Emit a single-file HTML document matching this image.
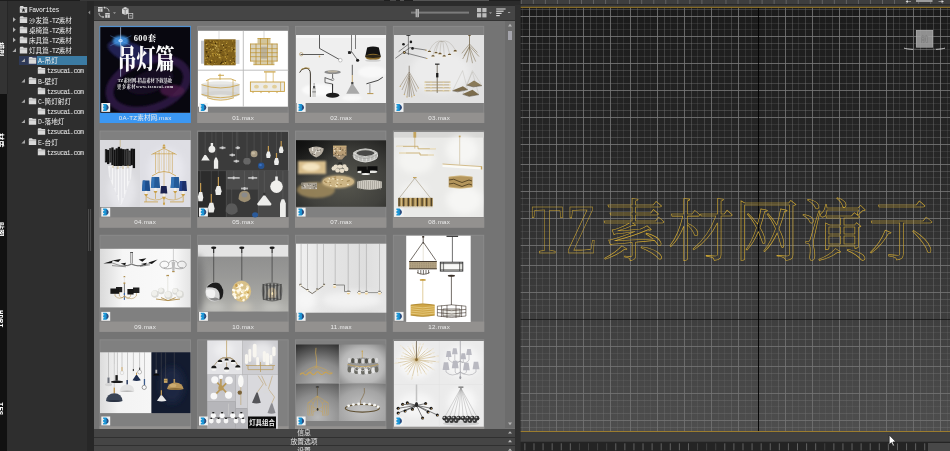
<!DOCTYPE html><html><head><meta charset="utf-8"><title>TZ</title><style>
*{margin:0;padding:0;box-sizing:border-box}
html,body{width:950px;height:451px;overflow:hidden;background:#2d2d2d}
body{position:relative;font-family:"Liberation Mono","Noto Sans CJK SC",monospace;font-size:6.6px;color:#d6d6d6}
.a{position:absolute}
.t{position:absolute;white-space:nowrap;line-height:10px;height:10px;font-size:6.5px;letter-spacing:-0.6px;will-change:transform;color:#f2f2f2}
.t b{font-weight:normal;letter-spacing:0;font-size:6.6px}
.lab{position:absolute;text-align:center;white-space:nowrap;line-height:10.3px;height:10.3px;color:#ececec;font-family:"Liberation Sans","Noto Sans CJK SC",sans-serif;font-size:6.2px;letter-spacing:0.25px;will-change:transform}
.lab b{font-weight:normal;letter-spacing:0;font-size:6.6px}
.vt{will-change:transform;position:absolute;white-space:nowrap;transform-origin:0 0;transform:rotate(90deg);color:#fff;font-weight:bold;font-size:7px;line-height:8px;letter-spacing:0}
</style></head><body><div class="a" style="left:0px;top:0px;width:6.7px;height:451px;background:#111;"></div><div class="a" style="left:0px;top:0px;width:6.7px;height:94px;background:#333;"></div><div class="a" style="left:0px;top:0px;width:6.7px;height:1.2px;background:#2a6fa0;"></div><div class="a" style="left:6.7px;top:0px;width:1.5px;height:94px;background:#262626;"></div><div class="vt" style="left:4.2px;top:41.5px;font-size:7.2px">模型</div><div class="vt" style="left:4.2px;top:132.5px;font-size:7.2px">材质</div><div class="vt" style="left:4.2px;top:221.5px;font-size:7.2px">贴图</div><div class="vt" style="left:4.2px;top:310px;font-size:7.4px">HDRI</div><div class="vt" style="left:4.2px;top:402px;font-size:7.4px">IES</div><div class="a" style="left:8.2px;top:0px;width:79px;height:451px;background:#2e2e2e;"></div><div class="a" style="left:0px;top:0px;width:94px;height:1px;background:#1d1d1d;"></div><div class="t" style="left:29.1px;top:6.4px">Favorites</div><div class="t" style="left:29.1px;top:16.57px"><b>沙发篇</b>-TZ<b>素材</b></div><div class="t" style="left:29.1px;top:26.740000000000002px"><b>桌椅篇</b>-TZ<b>素材</b></div><div class="t" style="left:29.1px;top:36.91px"><b>床具篇</b>-TZ<b>素材</b></div><div class="t" style="left:29.1px;top:47.08px"><b>灯具篇</b>-TZ<b>素材</b></div><div class="a" style="left:19px;top:55.65px;width:68px;height:9.4px;background:#2f3a58;"></div><div class="a" style="left:36.5px;top:55.65px;width:50.5px;height:9.4px;background:#3b7ba3;"></div><div class="t" style="left:38.1px;top:57.25px">A-<b>吊灯</b></div><div class="t" style="left:47.1px;top:67.42px">tzsucai.com</div><div class="t" style="left:38.1px;top:77.59px">B-<b>壁灯</b></div><div class="t" style="left:47.1px;top:87.76px">tzsucai.com</div><div class="t" style="left:38.1px;top:97.93px">C-<b>筒灯射灯</b></div><div class="t" style="left:47.1px;top:108.10000000000001px">tzsucai.com</div><div class="t" style="left:38.1px;top:118.27000000000001px">D-<b>落地灯</b></div><div class="t" style="left:47.1px;top:128.44px">tzsucai.com</div><div class="t" style="left:38.1px;top:138.61px">E-<b>台灯</b></div><div class="t" style="left:47.1px;top:148.78px">tzsucai.com</div><svg class="a" style="left:0;top:0" width="94" height="451" viewBox="0 0 94 451"><g transform="translate(19.5,5.800000000000001)"><path d="M0.3 1.2 L0.9 0.3 L3.6 0.3 L4.2 1.2 L7.7 1.2 L7.7 7 L0.3 7 Z" fill="#d9d9d9"/><path d="M0.3 2.6 H7.7" stroke="#9a9a9a" stroke-width="0.5"/><path d="M4 2.2 L4.6 3.8 L6.2 3.8 L4.9 4.8 L5.4 6.4 L4 5.4 L2.6 6.4 L3.1 4.8 L1.8 3.8 L3.4 3.8 Z" fill="#222"/></g><g transform="translate(19.5,15.97)"><path d="M0.3 1.2 L0.9 0.3 L3.6 0.3 L4.2 1.2 L7.7 1.2 L7.7 7 L0.3 7 Z" fill="#d9d9d9"/><path d="M0.3 2.6 H7.7" stroke="#9a9a9a" stroke-width="0.5"/></g><path d="M13.0 17.17 L15.8 19.57 L13.0 21.97 Z" fill="#b0b0b0"/><g transform="translate(19.5,26.14)"><path d="M0.3 1.2 L0.9 0.3 L3.6 0.3 L4.2 1.2 L7.7 1.2 L7.7 7 L0.3 7 Z" fill="#d9d9d9"/><path d="M0.3 2.6 H7.7" stroke="#9a9a9a" stroke-width="0.5"/></g><path d="M13.0 27.340000000000003 L15.8 29.740000000000002 L13.0 32.14 Z" fill="#b0b0b0"/><g transform="translate(19.5,36.309999999999995)"><path d="M0.3 1.2 L0.9 0.3 L3.6 0.3 L4.2 1.2 L7.7 1.2 L7.7 7 L0.3 7 Z" fill="#d9d9d9"/><path d="M0.3 2.6 H7.7" stroke="#9a9a9a" stroke-width="0.5"/></g><path d="M13.0 37.51 L15.8 39.91 L13.0 42.309999999999995 Z" fill="#b0b0b0"/><g transform="translate(19.5,46.48)"><path d="M0.3 1.2 L0.9 0.3 L3.6 0.3 L4.2 1.2 L7.7 1.2 L7.7 7 L0.3 7 Z" fill="#d9d9d9"/><path d="M0.3 2.6 H7.7" stroke="#9a9a9a" stroke-width="0.5"/></g><path d="M16.0 48.28 L16.0 51.879999999999995 L12.4 51.879999999999995 Z" fill="#a8a8a8"/><g transform="translate(28.5,56.65)"><path d="M0.3 1.2 L0.9 0.3 L3.6 0.3 L4.2 1.2 L7.7 1.2 L7.7 7 L0.3 7 Z" fill="#d9d9d9"/><path d="M0.3 2.6 H7.7" stroke="#9a9a9a" stroke-width="0.5"/></g><path d="M25.0 58.45 L25.0 62.05 L21.4 62.05 Z" fill="#a8a8a8"/><g transform="translate(37.5,66.82000000000001)"><path d="M0.3 1.2 L0.9 0.3 L3.6 0.3 L4.2 1.2 L7.7 1.2 L7.7 7 L0.3 7 Z" fill="#d9d9d9"/><path d="M0.3 2.6 H7.7" stroke="#9a9a9a" stroke-width="0.5"/></g><g transform="translate(28.5,76.99000000000001)"><path d="M0.3 1.2 L0.9 0.3 L3.6 0.3 L4.2 1.2 L7.7 1.2 L7.7 7 L0.3 7 Z" fill="#d9d9d9"/><path d="M0.3 2.6 H7.7" stroke="#9a9a9a" stroke-width="0.5"/></g><path d="M25.0 78.79 L25.0 82.39 L21.4 82.39 Z" fill="#a8a8a8"/><g transform="translate(37.5,87.16000000000001)"><path d="M0.3 1.2 L0.9 0.3 L3.6 0.3 L4.2 1.2 L7.7 1.2 L7.7 7 L0.3 7 Z" fill="#d9d9d9"/><path d="M0.3 2.6 H7.7" stroke="#9a9a9a" stroke-width="0.5"/></g><g transform="translate(28.5,97.33000000000001)"><path d="M0.3 1.2 L0.9 0.3 L3.6 0.3 L4.2 1.2 L7.7 1.2 L7.7 7 L0.3 7 Z" fill="#d9d9d9"/><path d="M0.3 2.6 H7.7" stroke="#9a9a9a" stroke-width="0.5"/></g><path d="M25.0 99.13000000000001 L25.0 102.73 L21.4 102.73 Z" fill="#a8a8a8"/><g transform="translate(37.5,107.50000000000001)"><path d="M0.3 1.2 L0.9 0.3 L3.6 0.3 L4.2 1.2 L7.7 1.2 L7.7 7 L0.3 7 Z" fill="#d9d9d9"/><path d="M0.3 2.6 H7.7" stroke="#9a9a9a" stroke-width="0.5"/></g><g transform="translate(28.5,117.67000000000002)"><path d="M0.3 1.2 L0.9 0.3 L3.6 0.3 L4.2 1.2 L7.7 1.2 L7.7 7 L0.3 7 Z" fill="#d9d9d9"/><path d="M0.3 2.6 H7.7" stroke="#9a9a9a" stroke-width="0.5"/></g><path d="M25.0 119.47000000000001 L25.0 123.07000000000001 L21.4 123.07000000000001 Z" fill="#a8a8a8"/><g transform="translate(37.5,127.84)"><path d="M0.3 1.2 L0.9 0.3 L3.6 0.3 L4.2 1.2 L7.7 1.2 L7.7 7 L0.3 7 Z" fill="#d9d9d9"/><path d="M0.3 2.6 H7.7" stroke="#9a9a9a" stroke-width="0.5"/></g><g transform="translate(28.5,138.01000000000002)"><path d="M0.3 1.2 L0.9 0.3 L3.6 0.3 L4.2 1.2 L7.7 1.2 L7.7 7 L0.3 7 Z" fill="#d9d9d9"/><path d="M0.3 2.6 H7.7" stroke="#9a9a9a" stroke-width="0.5"/></g><path d="M25.0 139.81 L25.0 143.41000000000003 L21.4 143.41000000000003 Z" fill="#a8a8a8"/><g transform="translate(37.5,148.18)"><path d="M0.3 1.2 L0.9 0.3 L3.6 0.3 L4.2 1.2 L7.7 1.2 L7.7 7 L0.3 7 Z" fill="#d9d9d9"/><path d="M0.3 2.6 H7.7" stroke="#9a9a9a" stroke-width="0.5"/></g></svg><div class="a" style="left:87px;top:0px;width:7px;height:451px;background:#272727;"></div><svg class="a" style="left:87px;top:0" width="7" height="451" viewBox="0 0 7 451"><path d="M3.2 10.5 L3.2 14.5 L1.2 12.5 Z" fill="#8a8a8a"/><path d="M1.6 209V251M3.6 209V251" stroke="#6a6a6a" stroke-width="0.6"/></svg><div class="a" style="left:94px;top:0px;width:420.7px;height:451px;background:#747474;"></div><div class="a" style="left:94px;top:0px;width:426.7px;height:5.5px;background:#2b2b2b;"></div><div class="a" style="left:94px;top:0px;width:426.7px;height:1px;background:#1f1f1f;"></div><div class="a" style="left:94px;top:5.5px;width:420.5px;height:14.6px;background:#454545;"></div><div class="a" style="left:94px;top:20.1px;width:420.5px;height:0.8px;background:#333;"></div><div class="a" style="left:514.6px;top:5px;width:6.1px;height:446px;background:#2f2f2f;"></div><div class="a" style="left:400px;top:0px;width:4px;height:1px;background:#555;"></div><div class="a" style="left:413px;top:0px;width:76px;height:1px;background:#555;"></div><div class="a" style="left:390px;top:0px;width:6px;height:1px;background:#4a4a4a;"></div><div class="a" style="left:80px;top:0.3px;width:304px;height:0.9px;background:#393939;"></div><svg class="a" style="left:0;top:0;will-change:transform" width="950" height="429" viewBox="0 0 950 429"><defs><clipPath id="mc"><rect x="94" y="21" width="411.3" height="407.6"/></clipPath><filter id="b3" x="-5%" y="-5%" width="110%" height="110%"><feGaussianBlur stdDeviation="0.35"/></filter><filter id="b8" x="-20%" y="-20%" width="140%" height="140%"><feGaussianBlur stdDeviation="1.2"/></filter><filter id="b20" x="-30%" y="-30%" width="160%" height="160%"><feGaussianBlur stdDeviation="3"/></filter></defs><g clip-path="url(#mc)"><rect x="99.60" y="25.90" width="91.30" height="97.10" fill="#3b97f2" /><rect x="100.30" y="26.70" width="89.90" height="86.00" fill="#808080" /><g id="im00"><rect x="100.30" y="27.10" width="89.80" height="85.60" fill="#08070f" /><clipPath id="k00"><rect x="100.3" y="27.099999999999998" width="89.80000000000001" height="85.6"/></clipPath><g clip-path="url(#k00)"><g filter="url(#b8)"><ellipse cx="148.3" cy="84.7" rx="40" ry="24" fill="none" stroke="#2e1742" stroke-width="8" opacity="0.9" transform="rotate(-18 148.3 84.7)"/><ellipse cx="150.3" cy="81.7" rx="24" ry="11" fill="#140a22" transform="rotate(-18 150.3 81.7)"/><ellipse cx="130.3" cy="52.7" rx="24" ry="10" fill="#24245a" opacity="0.9" transform="rotate(20 130.3 52.7)"/><ellipse cx="172.3" cy="90.7" rx="12" ry="6" fill="#4a1a4a" opacity="0.8"/><ellipse cx="120.80" cy="40.70" rx="8.00" ry="5.00" fill="#3a86d0" /></g><g filter="url(#b3)"><ellipse cx="120.60" cy="40.70" rx="2.20" ry="1.60" fill="#d8efff" /><path d="M120.6 27.2V76.7" stroke="#cfe0ff" stroke-width="0.8" fill="none" opacity="0.75"/><path d="M110.3 35.7L131.3 45.7M110.3 45.7L131.3 35.7" stroke="#5fa0f0" stroke-width="0.8" fill="none" opacity="0.45"/></g></g><text x="145.1" y="40.5" text-anchor="middle" font-family="'Liberation Serif','Noto Serif CJK SC',serif" font-weight="900" font-size="8.4" fill="#fafafa" letter-spacing="0.5">600套</text><text transform="translate(146.0 69.0) scale(0.70 1)" text-anchor="middle" font-family="'Liberation Serif','Noto Serif CJK SC',serif" font-weight="900" font-size="27" fill="#fbfbfb">吊灯篇</text><text x="144.9" y="81.5" text-anchor="middle" font-family="'Liberation Serif','Noto Serif CJK SC',serif" font-weight="700" font-size="4.3" fill="#e8e8e8">TZ素材网-精品素材下载基地</text><text x="145.1" y="87.8" text-anchor="middle" font-family="'Liberation Serif','Noto Serif CJK SC',serif" font-weight="700" font-size="4.3" fill="#e8e8e8" textLength="56">更多素材www.tzsucai.com</text><ellipse cx="169.80" cy="76.20" rx="0.50" ry="0.50" fill="#ddd" /><rect x="101.30" y="103.00" width="8.90" height="8.90" fill="#f1f1f1" /><path d="M103.1 103.9 H106.3 Q107.7 104.6 107.89999999999999 106.0 L106.7 107.4 L107.89999999999999 108.8 Q107.7 110.2 106.3 110.9 H103.1 V109.5 L104.6 108.9 L103.1 108.3 V106.5 L104.6 105.9 L103.1 105.3 Z" fill="#1b96d6" /><path d="M106.2 104.7 Q108.8 105.4 108.7 107.4 Q108.8 109.4 106.2 110.1 Q107.2 107.4 106.2 104.7 Z" fill="#2b4a7c" /></g><rect x="197.30" y="25.90" width="91.30" height="97.10" fill="#8d8d8d" /><rect x="198.00" y="26.70" width="89.80" height="96.30" fill="#808080" /><rect x="197.30" y="112.70" width="91.30" height="10.30" fill="#93918f" /><g id="im01"><rect x="198.00" y="30.80" width="89.90" height="75.90" fill="#ffffff" /><path d="M243.3 30.799999999999997V106.7M198.0 70.2H288.4" stroke="#b8b8b8" stroke-width="0.9" fill="none" /><path d="M219.0 30.799999999999997V39.3" stroke="#c8c8c8" stroke-width="0.6" fill="none" /><rect x="201.00" y="40.70" width="3.40" height="23.00" fill="#c4c6cc" /><rect x="235.60" y="39.90" width="3.80" height="24.00" fill="#d0d2d6" /><rect x="204.20" y="39.30" width="31.40" height="26.00" fill="#80611c" /><rect x="211.79" y="53.20" width="0.93" height="0.98" fill="#d8b850" /><rect x="222.14" y="54.72" width="1.42" height="0.88" fill="#5a4210" /><rect x="211.68" y="64.39" width="1.02" height="1.17" fill="#a88428" /><rect x="216.59" y="61.05" width="0.81" height="0.62" fill="#5a4210" /><rect x="216.38" y="40.08" width="1.30" height="0.63" fill="#5a4210" /><rect x="205.89" y="59.05" width="1.34" height="0.72" fill="#5a4210" /><rect x="226.31" y="61.49" width="1.24" height="1.24" fill="#a88428" /><rect x="226.59" y="54.01" width="1.47" height="0.61" fill="#3d2a08" /><rect x="207.54" y="43.07" width="0.80" height="1.27" fill="#a88428" /><rect x="228.12" y="60.91" width="0.98" height="1.17" fill="#5a4210" /><rect x="215.20" y="54.21" width="1.13" height="1.22" fill="#d8b850" /><rect x="232.26" y="40.41" width="0.85" height="0.98" fill="#d8b850" /><rect x="209.53" y="61.04" width="1.47" height="1.22" fill="#5a4210" /><rect x="207.74" y="55.96" width="1.17" height="1.29" fill="#3d2a08" /><rect x="213.21" y="41.27" width="1.37" height="1.29" fill="#c9a43c" /><rect x="214.99" y="41.35" width="1.41" height="0.52" fill="#a88428" /><rect x="227.82" y="61.34" width="0.64" height="0.99" fill="#c9a43c" /><rect x="216.01" y="54.24" width="1.10" height="1.24" fill="#3d2a08" /><rect x="219.86" y="64.46" width="0.88" height="0.56" fill="#5a4210" /><rect x="220.77" y="63.23" width="1.47" height="0.73" fill="#3d2a08" /><rect x="209.32" y="40.75" width="1.38" height="0.75" fill="#e0c66a" /><rect x="231.68" y="49.07" width="1.01" height="0.92" fill="#d8b850" /><rect x="230.78" y="56.59" width="0.69" height="1.28" fill="#5a4210" /><rect x="212.79" y="55.43" width="1.24" height="1.25" fill="#a88428" /><rect x="234.13" y="52.62" width="1.09" height="0.51" fill="#a88428" /><rect x="234.42" y="47.51" width="0.94" height="0.97" fill="#e0c66a" /><rect x="206.41" y="55.26" width="1.02" height="1.04" fill="#3d2a08" /><rect x="222.99" y="46.62" width="1.04" height="0.97" fill="#d8b850" /><rect x="205.24" y="48.86" width="1.17" height="0.74" fill="#5a4210" /><rect x="214.26" y="48.73" width="0.88" height="0.80" fill="#5a4210" /><rect x="212.58" y="59.23" width="0.69" height="1.15" fill="#5a4210" /><rect x="225.25" y="42.96" width="1.05" height="1.02" fill="#3d2a08" /><rect x="211.81" y="44.35" width="0.99" height="1.06" fill="#c9a43c" /><rect x="222.74" y="63.24" width="1.21" height="0.68" fill="#e0c66a" /><rect x="207.01" y="58.10" width="0.80" height="0.95" fill="#3d2a08" /><rect x="211.40" y="42.70" width="1.08" height="0.65" fill="#5a4210" /><rect x="210.14" y="46.61" width="1.33" height="1.01" fill="#5a4210" /><rect x="215.03" y="42.92" width="0.86" height="1.14" fill="#3d2a08" /><rect x="218.63" y="55.43" width="0.86" height="0.95" fill="#c9a43c" /><rect x="232.40" y="43.57" width="0.60" height="1.25" fill="#5a4210" /><rect x="234.40" y="50.47" width="1.46" height="1.24" fill="#e0c66a" /><rect x="205.58" y="51.03" width="1.28" height="1.10" fill="#3d2a08" /><rect x="221.02" y="61.76" width="1.38" height="1.19" fill="#3d2a08" /><rect x="208.22" y="45.76" width="0.63" height="1.14" fill="#5a4210" /><rect x="232.50" y="61.93" width="1.41" height="0.96" fill="#c9a43c" /><rect x="219.13" y="42.70" width="1.05" height="0.69" fill="#c9a43c" /><rect x="220.45" y="49.96" width="1.45" height="0.99" fill="#3d2a08" /><rect x="208.39" y="63.81" width="1.09" height="1.15" fill="#c9a43c" /><rect x="215.23" y="44.59" width="1.08" height="1.15" fill="#e0c66a" /><rect x="211.83" y="46.49" width="1.40" height="0.60" fill="#c9a43c" /><rect x="219.32" y="53.86" width="0.96" height="1.11" fill="#e0c66a" /><rect x="212.71" y="52.78" width="0.98" height="0.88" fill="#c9a43c" /><rect x="230.48" y="58.93" width="0.64" height="0.54" fill="#a88428" /><rect x="234.04" y="60.89" width="0.68" height="0.90" fill="#3d2a08" /><rect x="209.34" y="41.48" width="0.95" height="0.81" fill="#3d2a08" /><rect x="215.50" y="44.44" width="0.90" height="0.60" fill="#5a4210" /><rect x="204.71" y="57.63" width="1.32" height="0.95" fill="#c9a43c" /><rect x="215.87" y="54.69" width="1.30" height="0.80" fill="#c9a43c" /><rect x="223.41" y="50.40" width="0.94" height="0.90" fill="#d8b850" /><rect x="214.11" y="63.27" width="0.98" height="0.51" fill="#e0c66a" /><rect x="220.78" y="56.94" width="0.66" height="0.84" fill="#a88428" /><rect x="208.54" y="40.40" width="0.89" height="1.28" fill="#5a4210" /><rect x="228.49" y="46.20" width="1.02" height="0.60" fill="#d8b850" /><rect x="224.60" y="61.71" width="1.31" height="1.03" fill="#d8b850" /><rect x="214.22" y="52.89" width="1.33" height="1.07" fill="#a88428" /><rect x="208.93" y="58.90" width="0.64" height="0.57" fill="#c9a43c" /><rect x="224.51" y="49.02" width="1.34" height="0.77" fill="#c9a43c" /><rect x="205.37" y="42.55" width="1.03" height="1.06" fill="#3d2a08" /><rect x="222.09" y="59.51" width="0.63" height="1.11" fill="#5a4210" /><rect x="220.58" y="45.61" width="1.10" height="0.58" fill="#5a4210" /><rect x="206.45" y="47.74" width="1.11" height="1.16" fill="#e0c66a" /><rect x="234.75" y="55.72" width="1.01" height="1.06" fill="#a88428" /><rect x="212.24" y="54.57" width="1.44" height="0.95" fill="#c9a43c" /><rect x="215.93" y="45.53" width="1.44" height="1.17" fill="#e0c66a" /><rect x="217.14" y="53.80" width="1.12" height="1.24" fill="#d8b850" /><rect x="219.21" y="55.65" width="1.41" height="0.62" fill="#c9a43c" /><rect x="219.64" y="51.69" width="1.23" height="1.26" fill="#5a4210" /><rect x="226.31" y="44.32" width="0.84" height="0.66" fill="#5a4210" /><rect x="220.17" y="62.88" width="1.37" height="0.93" fill="#3d2a08" /><rect x="224.88" y="60.91" width="1.14" height="0.97" fill="#3d2a08" /><rect x="231.46" y="47.32" width="0.84" height="1.14" fill="#e0c66a" /><rect x="209.80" y="48.64" width="0.89" height="1.12" fill="#e0c66a" /><rect x="217.24" y="57.00" width="1.23" height="0.66" fill="#5a4210" /><rect x="229.81" y="60.08" width="1.10" height="0.89" fill="#d8b850" /><rect x="206.79" y="63.20" width="1.30" height="1.21" fill="#c9a43c" /><rect x="218.72" y="45.39" width="0.81" height="1.07" fill="#d8b850" /><rect x="206.69" y="45.09" width="0.83" height="1.21" fill="#3d2a08" /><rect x="208.75" y="55.12" width="1.21" height="0.53" fill="#3d2a08" /><rect x="209.73" y="40.82" width="0.76" height="0.57" fill="#c9a43c" /><rect x="208.16" y="46.25" width="1.42" height="0.53" fill="#a88428" /><rect x="222.13" y="56.45" width="0.61" height="0.77" fill="#a88428" /><rect x="216.07" y="41.63" width="1.18" height="1.09" fill="#a88428" /><rect x="216.41" y="53.20" width="0.71" height="0.72" fill="#d8b850" /><rect x="217.66" y="50.57" width="1.07" height="0.70" fill="#5a4210" /><rect x="233.03" y="48.98" width="1.30" height="1.11" fill="#3d2a08" /><rect x="224.62" y="56.32" width="1.45" height="1.15" fill="#c9a43c" /><rect x="227.38" y="63.54" width="1.21" height="0.93" fill="#c9a43c" /><rect x="224.74" y="52.32" width="0.65" height="0.74" fill="#d8b850" /><rect x="221.71" y="44.21" width="1.18" height="1.00" fill="#e0c66a" /><rect x="215.80" y="62.52" width="1.01" height="0.59" fill="#5a4210" /><rect x="208.87" y="47.92" width="1.25" height="0.98" fill="#5a4210" /><rect x="213.68" y="44.34" width="1.03" height="1.13" fill="#d8b850" /><rect x="206.67" y="57.45" width="1.28" height="0.93" fill="#d8b850" /><rect x="216.43" y="42.18" width="0.84" height="0.54" fill="#e0c66a" /><rect x="205.87" y="52.22" width="0.82" height="1.12" fill="#3d2a08" /><rect x="231.03" y="63.14" width="1.00" height="1.15" fill="#c9a43c" /><rect x="215.26" y="60.70" width="0.70" height="0.72" fill="#c9a43c" /><rect x="225.18" y="53.70" width="1.42" height="0.59" fill="#d8b850" /><rect x="210.31" y="50.03" width="1.27" height="1.15" fill="#d8b850" /><rect x="208.48" y="54.78" width="1.37" height="1.14" fill="#5a4210" /><rect x="220.53" y="53.80" width="0.78" height="0.70" fill="#3d2a08" /><rect x="205.51" y="59.62" width="1.40" height="1.26" fill="#a88428" /><rect x="214.14" y="62.17" width="0.88" height="0.90" fill="#5a4210" /><rect x="225.34" y="47.13" width="1.37" height="0.89" fill="#5a4210" /><rect x="210.35" y="55.42" width="0.70" height="1.10" fill="#e0c66a" /><rect x="219.45" y="52.69" width="1.01" height="0.65" fill="#5a4210" /><rect x="211.00" y="59.86" width="1.43" height="1.26" fill="#c9a43c" /><rect x="221.69" y="63.48" width="1.40" height="0.61" fill="#c9a43c" /><rect x="223.42" y="40.96" width="0.92" height="0.69" fill="#c9a43c" /><rect x="219.66" y="40.17" width="0.91" height="0.76" fill="#3d2a08" /><rect x="225.58" y="43.03" width="1.37" height="0.98" fill="#c9a43c" /><rect x="226.22" y="58.05" width="0.91" height="1.15" fill="#c9a43c" /><rect x="230.62" y="50.54" width="1.28" height="0.89" fill="#c9a43c" /><rect x="228.36" y="49.83" width="1.36" height="1.06" fill="#a88428" /><rect x="219.61" y="57.04" width="1.08" height="0.84" fill="#d8b850" /><rect x="219.37" y="40.28" width="1.01" height="1.05" fill="#a88428" /><rect x="210.05" y="62.01" width="1.25" height="0.79" fill="#3d2a08" /><rect x="218.12" y="48.67" width="0.96" height="1.28" fill="#e0c66a" /><rect x="212.41" y="48.87" width="1.37" height="0.93" fill="#e0c66a" /><rect x="210.92" y="43.93" width="0.96" height="0.63" fill="#c9a43c" /><rect x="208.81" y="54.80" width="1.00" height="0.65" fill="#c9a43c" /><rect x="216.77" y="47.58" width="0.63" height="1.07" fill="#e0c66a" /><rect x="216.78" y="49.54" width="0.62" height="1.27" fill="#e0c66a" /><rect x="211.90" y="49.35" width="0.77" height="0.77" fill="#c9a43c" /><rect x="215.06" y="42.77" width="0.65" height="1.08" fill="#3d2a08" /><rect x="234.23" y="63.06" width="1.31" height="1.27" fill="#a88428" /><rect x="212.15" y="46.29" width="1.33" height="1.00" fill="#3d2a08" /><rect x="214.17" y="41.11" width="0.99" height="0.57" fill="#5a4210" /><rect x="204.71" y="40.45" width="0.68" height="0.64" fill="#c9a43c" /><rect x="219.15" y="44.39" width="1.06" height="0.76" fill="#a88428" /><rect x="214.87" y="51.57" width="0.92" height="1.03" fill="#a88428" /><rect x="213.80" y="54.75" width="1.45" height="0.57" fill="#3d2a08" /><rect x="210.16" y="49.94" width="1.06" height="0.94" fill="#5a4210" /><rect x="225.14" y="62.73" width="0.76" height="1.09" fill="#d8b850" /><rect x="216.25" y="62.95" width="0.92" height="0.65" fill="#a88428" /><rect x="217.84" y="50.72" width="1.23" height="0.78" fill="#e0c66a" /><rect x="219.91" y="58.37" width="1.42" height="1.06" fill="#a88428" /><rect x="205.89" y="43.96" width="1.28" height="1.16" fill="#c9a43c" /><rect x="227.51" y="56.50" width="0.69" height="0.69" fill="#d8b850" /><rect x="206.30" y="54.88" width="0.64" height="0.87" fill="#d8b850" /><rect x="224.13" y="64.42" width="0.60" height="0.66" fill="#c9a43c" /><rect x="214.82" y="47.42" width="1.01" height="1.16" fill="#e0c66a" /><rect x="211.87" y="40.91" width="0.74" height="1.02" fill="#5a4210" /><rect x="234.36" y="42.48" width="0.86" height="0.67" fill="#5a4210" /><rect x="220.17" y="52.22" width="1.42" height="0.76" fill="#5a4210" /><rect x="228.22" y="51.29" width="1.16" height="0.53" fill="#c9a43c" /><rect x="222.66" y="61.00" width="0.69" height="1.25" fill="#3d2a08" /><rect x="207.19" y="51.24" width="0.80" height="1.16" fill="#5a4210" /><rect x="207.89" y="51.74" width="1.20" height="1.06" fill="#a88428" /><rect x="222.81" y="50.75" width="0.70" height="1.17" fill="#5a4210" /><rect x="218.00" y="49.11" width="0.71" height="0.51" fill="#3d2a08" /><rect x="226.59" y="41.62" width="0.91" height="0.89" fill="#c9a43c" /><rect x="232.50" y="56.72" width="0.93" height="1.13" fill="#c9a43c" /><rect x="222.90" y="45.01" width="0.92" height="1.30" fill="#3d2a08" /><rect x="211.73" y="50.59" width="0.83" height="0.76" fill="#d8b850" /><rect x="232.71" y="57.71" width="1.39" height="1.29" fill="#5a4210" /><rect x="218.60" y="57.34" width="1.37" height="0.79" fill="#e0c66a" /><rect x="231.87" y="63.25" width="1.04" height="1.12" fill="#a88428" /><rect x="218.78" y="54.27" width="0.63" height="1.27" fill="#c9a43c" /><rect x="210.17" y="42.08" width="1.25" height="0.74" fill="#5a4210" /><path d="M264.0 30.799999999999997V38.7" stroke="#b9b9b9" stroke-width="0.6" fill="none" /><rect x="257.50" y="38.30" width="13.00" height="5.60" fill="#d2c49a" /><rect x="250.20" y="43.70" width="27.30" height="17.60" fill="#d9d2bc" /><rect x="253.40" y="61.30" width="21.00" height="3.60" fill="#d6cba8" /><path d="M250.2 44.0H277.5M250.2 48.7H277.5M250.2 52.7H277.5M250.2 56.7H277.5M250.2 61.099999999999994H277.5M253.4 64.7H274.4M257.5 38.5H270.5" stroke="#c39a3a" stroke-width="0.8" fill="none" /><path d="M250.5 43.7V61.3M256.0 43.7V64.7M260.5 38.3V64.7M267.5 38.3V64.7M272.0 43.7V64.7M277.2 43.7V61.3" stroke="#b48a2e" stroke-width="0.7" fill="none" /><rect x="261.00" y="46.70" width="6.00" height="12.00" fill="#a89c84" opacity="0.6"/><path d="M220.0 73.7V79.7M218.0 75.3H224.0" stroke="#c8a040" stroke-width="0.9" fill="none" /><path d="M206.0 80.9L210.0 78.9H231.0L236.0 80.9" stroke="#c8a040" stroke-width="0.8" fill="none" /><ellipse cx="220.50" cy="84.50" rx="19.00" ry="3.20" fill="#e9e9e6" /><rect x="201.50" y="84.50" width="38.00" height="10.00" fill="#dcdcda" /><ellipse cx="220.50" cy="94.50" rx="19.00" ry="3.40" fill="#d4d4d2" /><ellipse cx="220.50" cy="97.10" rx="13.50" ry="2.60" fill="#e6e6e2" /><path d="M201.5 84.7Q220.5 91.2 239.5 84.7M201.5 94.3Q220.5 101.2 239.5 94.3M207.0 97.7Q220.5 102.7 234.0 97.7" stroke="#c9a040" stroke-width="0.8" fill="none" /><path d="M208.0 79.7V96.7M233.0 79.7V96.7" stroke="#c9a040" stroke-width="0.6" fill="none" /><path d="M264.0 71.9H275.5" stroke="#c9a040" stroke-width="1.2" fill="none" /><path d="M266.0 72.2V82.2M273.2 72.2V82.2" stroke="#c9a040" stroke-width="0.6" fill="none" /><rect x="250.40" y="82.00" width="34.00" height="9.40" fill="#ecebe6" /><rect x="250.4" y="82.0" width="34" height="9.4" fill="none" stroke="#c9a040" stroke-width="0.9"/><path d="M280.6 82.0V91.4" stroke="#c9a040" stroke-width="0.7" fill="none" /><ellipse cx="256.50" cy="86.70" rx="2.40" ry="1.90" fill="#e2cf9a" /><ellipse cx="265.50" cy="86.70" rx="2.40" ry="1.90" fill="#e2cf9a" /><ellipse cx="274.50" cy="86.70" rx="2.40" ry="1.90" fill="#e2cf9a" /><path d="M253.0 91.7V93.10000000000001M261.0 91.7V93.10000000000001M269.0 91.7V93.10000000000001M277.0 91.7V93.10000000000001" stroke="#c9a040" stroke-width="0.9" fill="none" /><rect x="199.00" y="103.00" width="8.90" height="8.90" fill="#f1f1f1" /><path d="M200.8 103.9 H204.0 Q205.4 104.6 205.6 106.0 L204.4 107.4 L205.6 108.8 Q205.4 110.2 204.0 110.9 H200.8 V109.5 L202.3 108.9 L200.8 108.3 V106.5 L202.3 105.9 L200.8 105.3 Z" fill="#1b96d6" /><path d="M203.9 104.7 Q206.5 105.4 206.4 107.4 Q206.5 109.4 203.9 110.1 Q204.9 107.4 203.9 104.7 Z" fill="#2b4a7c" /></g><rect x="295.00" y="25.90" width="91.30" height="97.10" fill="#8d8d8d" /><rect x="295.70" y="26.70" width="89.80" height="96.30" fill="#808080" /><rect x="295.00" y="112.70" width="91.30" height="10.30" fill="#93918f" /><g id="im02"><g transform="translate(0.00 0.00)"><rect x="296.00" y="35.00" width="90.00" height="68.00" fill="#efefef" /><rect x="296.00" y="35.00" width="90.00" height="3.00" fill="#f6f6f6" /><clipPath id="k1"><rect x="296" y="35" width="90" height="68"/></clipPath><g clip-path="url(#k1)"><g filter="url(#b8)"><ellipse cx="318.00" cy="90.00" rx="16.00" ry="6.00" fill="#fafafa" /><ellipse cx="372.00" cy="72.00" rx="14.00" ry="6.00" fill="#f8f8f8" /><ellipse cx="352.00" cy="98.00" rx="10.00" ry="3.00" fill="#f8f8f8" /></g></g><path d="M319.5 35V48.4L340 59.9M300.6 54.5H324" stroke="#1a1a1a" stroke-width="0.7" fill="none" /><circle cx="301.2" cy="54.2" r="1.7" fill="none" stroke="#9a7a3a" stroke-width="0.5"/><circle cx="340.3" cy="60.2" r="1.8" fill="#fff" stroke="#777" stroke-width="0.4"/><ellipse cx="319.50" cy="56.40" rx="0.80" ry="1.00" fill="#d9b878" /><path d="M351.5 35V50.6M355.5 35V49" stroke="#2a2a2a" stroke-width="0.6" fill="none" /><path d="M351 50.8L357.4 59.8" stroke="#222" stroke-width="0.6" fill="none" /><ellipse cx="349.40" cy="52.40" rx="2.00" ry="1.50" fill="#222" /><ellipse cx="347.20" cy="52.80" rx="0.90" ry="1.20" fill="#eee" /><ellipse cx="357.60" cy="60.20" rx="1.60" ry="1.50" fill="#1a1a1a" /><path d="M365.2 56.6 L367.2 47.4 Q373 45.6 378.8 47.4 L380.8 56.6 Z" fill="#131313" /><ellipse cx="373.00" cy="57.00" rx="7.60" ry="3.20" fill="#8a6a2a" /><ellipse cx="373.00" cy="56.40" rx="7.80" ry="1.60" fill="#2a2418" /><ellipse cx="373.00" cy="60.60" rx="8.00" ry="1.20" fill="#d0d0d0" filter="url(#b3)"/><path d="M299.6 72.6Q301 68.4 306 68.2Q310.4 68.6 310.4 74V96.9" stroke="#2a2418" stroke-width="0.9" fill="none" /><path d="M301 69.6Q305 66.6 309.6 68.4" stroke="#a8842e" stroke-width="0.8" fill="none" /><rect x="312.30" y="88.00" width="3.60" height="9.00" fill="#d2d2d0" /><rect x="313.00" y="86.00" width="2.20" height="2.40" fill="#555" /><path d="M314.1 83V86" stroke="#444" stroke-width="0.5" fill="none" /><rect x="312.30" y="91.40" width="3.60" height="1.00" fill="#777" /><ellipse cx="332.60" cy="72.20" rx="8.20" ry="1.90" fill="#8c8c8c" /><ellipse cx="332.60" cy="71.40" rx="5.00" ry="1.00" fill="#b8b0a0" /><path d="M332.6 74V78.6M324.8 77.6L332.6 80.4M325 77.6V82.6L332.6 84" stroke="#2a2a2a" stroke-width="0.7" fill="none" /><circle cx="332.8" cy="79.4" r="1.1" fill="#eee" stroke="#333" stroke-width="0.4"/><path d="M332.6 84V93" stroke="#222" stroke-width="1.0" fill="none" /><ellipse cx="332.60" cy="95.20" rx="6.60" ry="2.50" fill="#1c1c1c" /><path d="M352.3 64.8V75" stroke="#222" stroke-width="0.7" fill="none" /><path d="M352.3 75V82" stroke="#b08a3a" stroke-width="0.7" fill="none" /><rect x="351.20" y="82.00" width="2.20" height="2.60" fill="#444" /><path d="M351.2 84.6 L353.4 84.6 L359.6 93.8 L346.2 93.8 Z" fill="#a9a9a9" /><path d="M366.4 83.8L378 80.4L382.8 77.2" stroke="#333" stroke-width="0.9" fill="none" /><path d="M369.9 84V93.4" stroke="#444" stroke-width="0.5" fill="none" /><path d="M367.2 93.6H373.4" stroke="#b08a3a" stroke-width="0.9" fill="none" /></g><rect x="296.70" y="103.00" width="8.90" height="8.90" fill="#f1f1f1" /><path d="M298.5 103.9 H301.7 Q303.09999999999997 104.6 303.3 106.0 L302.09999999999997 107.4 L303.3 108.8 Q303.09999999999997 110.2 301.7 110.9 H298.5 V109.5 L300.0 108.9 L298.5 108.3 V106.5 L300.0 105.9 L298.5 105.3 Z" fill="#1b96d6" /><path d="M301.59999999999997 104.7 Q304.2 105.4 304.09999999999997 107.4 Q304.2 109.4 301.59999999999997 110.1 Q302.59999999999997 107.4 301.59999999999997 104.7 Z" fill="#2b4a7c" /></g><rect x="392.90" y="25.90" width="91.30" height="97.10" fill="#8d8d8d" /><rect x="393.60" y="26.70" width="89.80" height="96.30" fill="#808080" /><rect x="392.90" y="112.70" width="91.30" height="10.30" fill="#93918f" /><g id="im03"><g transform="translate(0.00 0.00)"><rect x="394.00" y="35.00" width="90.00" height="68.00" fill="#e2e2e2" /><clipPath id="k2"><rect x="394" y="35" width="90" height="68"/></clipPath><g clip-path="url(#k2)"><g filter="url(#b20)"><ellipse cx="440.00" cy="72.00" rx="30.00" ry="22.00" fill="#ececec" /></g></g><path d="M408.4 35V55M395.3 58.3L410 47.6L425.7 50M398.6 51.7L408.4 44.3M404.3 52.5L426.5 58.3" stroke="#2e2e2e" stroke-width="0.55" fill="none" /><rect x="406.40" y="35.00" width="4.00" height="0.80" fill="#222" /><ellipse cx="403.50" cy="44.30" rx="1.30" ry="1.30" fill="#1a1a1a" /><ellipse cx="410.90" cy="41.90" rx="1.30" ry="1.30" fill="#1a1a1a" /><ellipse cx="412.50" cy="48.40" rx="1.30" ry="1.30" fill="#1a1a1a" /><ellipse cx="404.30" cy="52.50" rx="1.40" ry="1.40" fill="#3a3020" /><ellipse cx="404.30" cy="52.50" rx="0.70" ry="0.70" fill="#d8b870" /><ellipse cx="426.00" cy="50.20" rx="0.80" ry="0.60" fill="#b89a5a" /><ellipse cx="426.80" cy="58.50" rx="0.80" ry="0.60" fill="#b89a5a" /><path d="M442 41.4Q435.1 39 429.4 50.4M442 41.4Q437.1 39 433 55.0M442 41.4Q438.7 39 436 51.699999999999996M442 41.4Q440.9 39 440 52.6M442 41.4Q443.2 39 444.2 55.0M442 41.4Q446.1 39 449.5 53.4M442 41.4Q449.3 39 455.2 49.8" stroke="#a8a49a" stroke-width="0.4" fill="none" /><ellipse cx="429.40" cy="52.00" rx="1.70" ry="1.60" fill="#f4f0e4" /><path d="M427.7 52 A1.7 1.6 0 0 1 431.09999999999997 52 Z" fill="#6a5530" /><ellipse cx="433.00" cy="56.60" rx="1.70" ry="1.60" fill="#f4f0e4" /><path d="M431.3 56.6 A1.7 1.6 0 0 1 434.7 56.6 Z" fill="#6a5530" /><ellipse cx="436.00" cy="53.30" rx="1.70" ry="1.60" fill="#f4f0e4" /><path d="M434.3 53.3 A1.7 1.6 0 0 1 437.7 53.3 Z" fill="#6a5530" /><ellipse cx="440.00" cy="54.20" rx="1.70" ry="1.60" fill="#f4f0e4" /><path d="M438.3 54.2 A1.7 1.6 0 0 1 441.7 54.2 Z" fill="#6a5530" /><ellipse cx="444.20" cy="56.60" rx="1.70" ry="1.60" fill="#f4f0e4" /><path d="M442.5 56.6 A1.7 1.6 0 0 1 445.9 56.6 Z" fill="#6a5530" /><ellipse cx="449.50" cy="55.00" rx="1.70" ry="1.60" fill="#f4f0e4" /><path d="M447.8 55 A1.7 1.6 0 0 1 451.2 55 Z" fill="#6a5530" /><ellipse cx="455.20" cy="51.40" rx="1.70" ry="1.60" fill="#f4f0e4" /><path d="M453.5 51.4 A1.7 1.6 0 0 1 456.9 51.4 Z" fill="#6a5530" /><path d="M469.5 35V49" stroke="#6a5a3e" stroke-width="0.7" fill="none" /><rect x="468.30" y="35.00" width="2.40" height="1.00" fill="#6a5a3e" /><path d="M469.5 44L461.8 53.3M469.5 44L477.4 52.5M469.5 47L462.6 59M469.5 47L475.7 61.6M469.5 49L466.7 62.4M469.5 49L472.5 63.2M469.5 46L464 56M469.5 46L479 56.5" stroke="#7a6a4a" stroke-width="0.5" fill="none" /><path d="M409.2 65.7V96.9" stroke="#5e5444" stroke-width="0.6" fill="none" /><path d="M409.2 72L400.2 86.2M409.2 72L418.3 87.8M409.2 76L404.3 94.4M409.2 76L414.2 95.2M409.2 74L402 90M409.2 74L416.6 91.6M409.2 78L407 97M409.2 78L411.8 96.6" stroke="#7a6c52" stroke-width="0.45" fill="none" /><ellipse cx="400.20" cy="86.40" rx="0.60" ry="0.60" fill="#c8a860" /><ellipse cx="418.30" cy="88.00" rx="0.60" ry="0.60" fill="#c8a860" /><ellipse cx="404.30" cy="94.60" rx="0.60" ry="0.60" fill="#c8a860" /><ellipse cx="414.20" cy="95.40" rx="0.60" ry="0.60" fill="#c8a860" /><ellipse cx="407.00" cy="97.00" rx="0.60" ry="0.60" fill="#c8a860" /><ellipse cx="411.80" cy="96.80" rx="0.60" ry="0.60" fill="#c8a860" /><path d="M437.2 64V92.8" stroke="#4a4030" stroke-width="0.7" fill="none" /><rect x="435.00" y="63.60" width="4.50" height="1.10" fill="#1c1c1c" /><rect x="436.10" y="73.00" width="2.30" height="4.40" fill="#1a1a1a" /><path d="M424.8 82.1H450.3M426 84.9H449M424.8 87.8H450.3M426 90.8H449" stroke="#a88c50" stroke-width="0.7" fill="none" /><ellipse cx="425.20" cy="82.10" rx="0.90" ry="0.70" fill="#e6d6a8" /><ellipse cx="431.00" cy="82.10" rx="0.90" ry="0.70" fill="#e6d6a8" /><ellipse cx="443.50" cy="82.10" rx="0.90" ry="0.70" fill="#e6d6a8" /><ellipse cx="449.80" cy="82.10" rx="0.90" ry="0.70" fill="#e6d6a8" /><ellipse cx="425.20" cy="84.90" rx="0.90" ry="0.70" fill="#e6d6a8" /><ellipse cx="431.00" cy="84.90" rx="0.90" ry="0.70" fill="#e6d6a8" /><ellipse cx="443.50" cy="84.90" rx="0.90" ry="0.70" fill="#e6d6a8" /><ellipse cx="449.80" cy="84.90" rx="0.90" ry="0.70" fill="#e6d6a8" /><ellipse cx="425.20" cy="87.80" rx="0.90" ry="0.70" fill="#e6d6a8" /><ellipse cx="431.00" cy="87.80" rx="0.90" ry="0.70" fill="#e6d6a8" /><ellipse cx="443.50" cy="87.80" rx="0.90" ry="0.70" fill="#e6d6a8" /><ellipse cx="449.80" cy="87.80" rx="0.90" ry="0.70" fill="#e6d6a8" /><ellipse cx="425.20" cy="90.80" rx="0.90" ry="0.70" fill="#e6d6a8" /><ellipse cx="431.00" cy="90.80" rx="0.90" ry="0.70" fill="#e6d6a8" /><ellipse cx="443.50" cy="90.80" rx="0.90" ry="0.70" fill="#e6d6a8" /><ellipse cx="449.80" cy="90.80" rx="0.90" ry="0.70" fill="#e6d6a8" /><path d="M462.6 70.6L453 90M462.6 70.6L467.5 89M472.4 70.6L467 84.6M472.4 70.6L481.6 85M472.4 72L463 93.6M472.4 72L478.6 94" stroke="#b5b0a8" stroke-width="0.35" fill="none" /><path d="M452.4 90.6L462.9 86.2L467.9 89.5L457.7 91.6Z" fill="#7c6c4c" /><path d="M466.7 84.9L474.1 80.4L482 85.4L473.3 86.7Z" fill="#8a7a58" /><path d="M462.6 94.1L472.5 89.8L479 94.4L469.2 96.2Z" fill="#7c6c4c" /><path d="M452.4 90.8L457.7 91.8L467.9 89.7M466.7 85.1L473.3 86.9L482 85.6M462.6 94.3L469.2 96.4L479 94.6" stroke="#4a4030" stroke-width="0.5" fill="none" /></g><rect x="394.60" y="103.00" width="8.90" height="8.90" fill="#f1f1f1" /><path d="M396.40000000000003 103.9 H399.6 Q401.0 104.6 401.20000000000005 106.0 L400.0 107.4 L401.20000000000005 108.8 Q401.0 110.2 399.6 110.9 H396.40000000000003 V109.5 L397.90000000000003 108.9 L396.40000000000003 108.3 V106.5 L397.90000000000003 105.9 L396.40000000000003 105.3 Z" fill="#1b96d6" /><path d="M399.5 104.7 Q402.1 105.4 402.0 107.4 Q402.1 109.4 399.5 110.1 Q400.5 107.4 399.5 104.7 Z" fill="#2b4a7c" /></g><rect x="99.60" y="130.60" width="91.30" height="97.10" fill="#8d8d8d" /><rect x="100.30" y="131.40" width="89.80" height="96.30" fill="#808080" /><rect x="99.60" y="217.40" width="91.30" height="10.30" fill="#93918f" /><g id="im10"><g transform="translate(0.00 0.00)"><rect x="100.00" y="140.00" width="40.00" height="67.00" fill="#d9d9dd" /><rect x="140.00" y="140.00" width="50.60" height="67.00" fill="#dedee4" /><clipPath id="k3"><rect x="100" y="140" width="90.6" height="67"/></clipPath><g clip-path="url(#k3)"><g filter="url(#b20)"><ellipse cx="122.00" cy="190.00" rx="14.00" ry="20.00" fill="#e6e6ea" /><ellipse cx="166.00" cy="170.00" rx="18.00" ry="22.00" fill="#e8e8ee" /></g></g><path d="M120.2 140V147" stroke="#b89a50" stroke-width="0.5" fill="none" /><rect x="104.90" y="149.21" width="2.29" height="13.17" fill="#121212" /><rect x="105.40" y="150.21" width="0.50" height="11.17" fill="#6a6a6a" /><rect x="107.04" y="149.91" width="2.29" height="14.17" fill="#121212" /><rect x="109.19" y="148.22" width="2.29" height="14.34" fill="#242424" /><rect x="109.69" y="149.22" width="0.50" height="12.34" fill="#6a6a6a" /><rect x="111.33" y="147.41" width="2.29" height="17.65" fill="#121212" /><rect x="113.47" y="149.59" width="2.29" height="16.80" fill="#121212" /><rect x="115.61" y="148.29" width="2.29" height="20.96" fill="#121212" /><rect x="117.76" y="146.85" width="2.29" height="19.08" fill="#121212" /><rect x="119.90" y="148.52" width="2.29" height="19.41" fill="#121212" /><rect x="122.04" y="149.13" width="2.29" height="16.50" fill="#121212" /><rect x="124.19" y="149.29" width="2.29" height="16.84" fill="#242424" /><rect x="126.33" y="148.85" width="2.29" height="19.76" fill="#0e0e0e" /><rect x="126.83" y="149.85" width="0.50" height="17.76" fill="#6a6a6a" /><rect x="128.47" y="150.57" width="2.29" height="16.27" fill="#1b1b1b" /><rect x="128.97" y="151.57" width="0.50" height="14.27" fill="#6a6a6a" /><rect x="130.61" y="148.60" width="2.29" height="16.62" fill="#0e0e0e" /><rect x="132.76" y="148.80" width="2.29" height="19.28" fill="#121212" /><g filter="url(#b3)" opacity="0.9"><path d="M108 166 L132 166 L131 178 L128 186 L125 196 L121.5 204.4 L119.5 204.4 L116.5 194 L112 184 L109 176 Z" fill="#f2f2f4" /><path d="M111 167V180M114 167V188M117 167V195M120 167V204M123 167V198M126 167V190M129 167V181" stroke="#c4c4cc" stroke-width="0.5" fill="none" /><path d="M112.5 167V184M118.5 167V200M124.5 167V194M127.5 167V186" stroke="#ffffff" stroke-width="0.5" fill="none" /></g><path d="M113 165.5V168M118 166V169M123 166V169M128 165V168" stroke="#c8a860" stroke-width="0.6" fill="none" /><path d="M162.6 146.6 L163.2 144 L164 145.6 L164.8 144 L165.4 146.6 Z" fill="#c9a04a" /><ellipse cx="164.00" cy="147.60" rx="1.60" ry="0.90" fill="#c9a04a" /><path d="M151.4 154.6L163.9 148.4L176.6 154.6M153 153.8H175" stroke="#c9a04a" stroke-width="0.7" fill="none" /><path d="M155.5 152.6V173M159.1 150.6V172M164 148.4V200M168.9 150.6V172M172.4 152.6V173" stroke="#c9a04a" stroke-width="0.55" fill="none" /><path d="M157.3 153V170M161.5 151V170M166.5 151V170M170.6 153V170" stroke="#e0c88a" stroke-width="0.4" fill="none" /><path d="M152 176Q164 167 176 176" stroke="#c9a04a" stroke-width="0.8" fill="none" /><path d="M161.09 185.9 L166.61 185.9 L167.3 193.6 L160.4 193.6 Z" fill="#1b2250" /><path d="M142.82 180.5 L149.38 180.5 L150.2 190.9 L142 190.9 Z" fill="#1f4f8e" /><path d="M142.82 180.5 L145.28 180.5 L144.87 190.9 L142 190.9 Z" fill="#2d68ac" /><path d="M180.07 181 L186.23 181 L187 190.9 L179.3 190.9 Z" fill="#1c2f6a" /><path d="M180.07 181 L182.38 181 L182.00 190.9 L179.3 190.9 Z" fill="#23408a" /><path d="M151.82 176.9 L159.18 176.9 L160.1 187.9 L150.9 187.9 Z" fill="#245a98" /><path d="M151.82 176.9 L154.58 176.9 L154.12 187.9 L150.9 187.9 Z" fill="#3473b4" /><path d="M171.52 176.9 L178.88 176.9 L179.8 187.9 L170.6 187.9 Z" fill="#245a98" /><path d="M171.52 176.9 L174.28 176.9 L173.82 187.9 L170.6 187.9 Z" fill="#3473b4" /><rect x="145.00" y="190.90" width="2.20" height="3.20" fill="#f2f0ea" /><path d="M144.1 194.1 H148.1 L146.7 196.3 H145.5 Z" fill="#c9a04a" /><path d="M146.1 196.3V201.9" stroke="#c9a04a" stroke-width="0.7" fill="none" /><rect x="154.40" y="187.90" width="2.20" height="3.20" fill="#f2f0ea" /><path d="M153.5 191.1 H157.5 L156.1 193.3 H154.9 Z" fill="#c9a04a" /><path d="M155.5 193.3V198.9" stroke="#c9a04a" stroke-width="0.7" fill="none" /><rect x="162.80" y="193.60" width="2.20" height="3.20" fill="#f2f0ea" /><path d="M161.9 196.79999999999998 H165.9 L164.5 199.0 H163.3 Z" fill="#c9a04a" /><path d="M163.9 199.0V202" stroke="#c9a04a" stroke-width="0.7" fill="none" /><rect x="174.10" y="187.90" width="2.20" height="3.20" fill="#f2f0ea" /><path d="M173.2 191.1 H177.2 L175.79999999999998 193.3 H174.6 Z" fill="#c9a04a" /><path d="M175.2 193.3V198.9" stroke="#c9a04a" stroke-width="0.7" fill="none" /><rect x="182.10" y="190.90" width="2.20" height="3.20" fill="#f2f0ea" /><path d="M181.2 194.1 H185.2 L183.79999999999998 196.3 H182.6 Z" fill="#c9a04a" /><path d="M183.2 196.3V201.9" stroke="#c9a04a" stroke-width="0.7" fill="none" /><path d="M144 201.9H158M170 201.9H183.4" stroke="#c9a04a" stroke-width="0.8" fill="none" /><path d="M146 196.5Q155 203 164 197.5Q173 203 183 196.5" stroke="#c9a04a" stroke-width="0.6" fill="none" /><ellipse cx="164.00" cy="203.60" rx="1.00" ry="1.60" fill="#c9a04a" /></g><rect x="101.30" y="207.70" width="8.90" height="8.90" fill="#f1f1f1" /><path d="M103.1 208.6 H106.3 Q107.7 209.29999999999998 107.89999999999999 210.7 L106.7 212.1 L107.89999999999999 213.5 Q107.7 214.89999999999998 106.3 215.6 H103.1 V214.2 L104.6 213.6 L103.1 213.0 V211.2 L104.6 210.6 L103.1 210.0 Z" fill="#1b96d6" /><path d="M106.2 209.39999999999998 Q108.8 210.1 108.7 212.1 Q108.8 214.1 106.2 214.79999999999998 Q107.2 212.1 106.2 209.39999999999998 Z" fill="#2b4a7c" /></g><rect x="197.30" y="130.60" width="91.30" height="97.10" fill="#8d8d8d" /><rect x="198.00" y="131.40" width="89.80" height="96.30" fill="#808080" /><rect x="197.30" y="217.40" width="91.30" height="10.30" fill="#93918f" /><g id="im11"><g transform="translate(0.00 0.00)"><rect x="198.20" y="131.90" width="89.80" height="38.90" fill="#3b3b3b" /><rect x="198.00" y="170.80" width="28.20" height="46.20" fill="#2c2c2c" /><rect x="226.20" y="170.80" width="32.00" height="18.30" fill="#4b4b4b" /><rect x="226.20" y="189.10" width="32.00" height="27.90" fill="#393939" /><rect x="258.20" y="170.80" width="30.20" height="46.20" fill="#484848" /><path d="M198 170.8H288.4M226.2 170.8V217M258.2 170.8V217M226.2 189.1H258.2" stroke="#525252" stroke-width="0.4" fill="none" /><path d="M211.9 131.4V143M205.2 131.4V155M215.9 131.4V157M222.5 131.4V147M237.8 131.4V147M232.3 131.4V154M236.4 131.4V160M254.1 131.4V150M247 131.4V157M261.2 131.4V162M268.4 131.4V147M281.2 131.4V141M276.5 131.4V153M218.4 170.8V177M200.6 170.8V183M211.3 170.8V194M233.7 170.8V177M252.7 170.8V177M244.5 170.8V188M244.5 189.1V191M231.7 189.1V203M276.5 170.8V177M264.3 170.8V193M282.9 170.8V199" stroke="#8a8a8a" stroke-width="0.3" fill="none" opacity="0.7"/><rect x="210.70" y="143.00" width="2.40" height="3.40" fill="#ededeb" /><ellipse cx="211.90" cy="149.20" rx="3.40" ry="3.50" fill="#ededeb" /><path d="M204.4 155 H206 L209.8 160.6 H201.2 Z" fill="#ededeb" /><path d="M215.2 157.5 H216.8 L218.2 161 V168.7 H213.9 V161 Z" fill="#ededeb" /><rect x="219.50" y="146.90" width="6.00" height="1.80" fill="#b4b4b4" /><rect x="221.60" y="146.40" width="1.80" height="2.80" fill="#d0d0d0" /><rect x="235.55" y="146.90" width="4.50" height="1.80" fill="#b4b4b4" /><rect x="236.90" y="146.40" width="1.80" height="2.80" fill="#d0d0d0" /><rect x="229.55" y="154.10" width="5.50" height="1.80" fill="#b4b4b4" /><rect x="231.40" y="153.60" width="1.80" height="2.80" fill="#d0d0d0" /><rect x="233.65" y="160.30" width="5.50" height="1.80" fill="#b4b4b4" /><rect x="235.50" y="159.80" width="1.80" height="2.80" fill="#d0d0d0" /><rect x="227.70" y="177.00" width="12.00" height="1.80" fill="#b4b4b4" /><rect x="232.80" y="176.50" width="1.80" height="2.80" fill="#d0d0d0" /><rect x="248.20" y="177.00" width="9.00" height="1.80" fill="#b4b4b4" /><rect x="251.80" y="176.50" width="1.80" height="2.80" fill="#d0d0d0" /><rect x="241.00" y="187.60" width="7.00" height="1.80" fill="#b4b4b4" /><rect x="243.60" y="187.10" width="1.80" height="2.80" fill="#d0d0d0" /><ellipse cx="254.10" cy="153.90" rx="3.40" ry="3.30" fill="#a89c84" /><ellipse cx="253.40" cy="153.20" rx="1.60" ry="1.40" fill="#c4b8a0" /><ellipse cx="247.00" cy="161.20" rx="3.70" ry="3.40" fill="#666" /><ellipse cx="261.20" cy="165.70" rx="3.20" ry="3.20" fill="#27528f" /><ellipse cx="260.50" cy="165.00" rx="1.30" ry="1.30" fill="#3a72c0" /><rect x="267.80" y="146.00" width="1.20" height="6.00" fill="#c39a52" /><path d="M267.25 151.5 L269.78 151.5 L270.7 155.46 L270.01 158.10000000000002 L266.56 158.10000000000002 L266.09999999999997 154.8 Z" fill="#ededeb" /><rect x="280.60" y="141.00" width="1.20" height="6.00" fill="#c39a52" /><path d="M280.05 146.5 L282.58 146.5 L283.5 150.46 L282.81 153.10000000000002 L279.36 153.10000000000002 L278.9 149.8 Z" fill="#ededeb" /><rect x="275.90" y="153.00" width="1.20" height="5.40" fill="#c39a52" /><path d="M275.25 157.9 L278.0 157.9 L279.0 162.1 L278.25 164.9 L274.5 164.9 L274.0 161.4 Z" fill="#ededeb" /><rect x="217.80" y="177.00" width="1.20" height="9.40" fill="#c39a52" /><path d="M216.8 185.9 L220.32 185.9 L221.6 191.3 L220.64000000000001 194.9 L215.84 194.9 L215.20000000000002 190.4 Z" fill="#ededeb" /><rect x="200.00" y="183.00" width="1.20" height="9.40" fill="#c39a52" /><path d="M199.25 191.9 L202.22 191.9 L203.29999999999998 197.54 L202.48999999999998 201.29999999999998 L198.44 201.29999999999998 L197.9 196.6 Z" fill="#ededeb" /><rect x="210.70" y="194.00" width="1.20" height="9.30" fill="#c39a52" /><path d="M209.65 202.79999999999998 L213.28 202.79999999999998 L214.60000000000002 208.56 L213.61 212.4 L208.66000000000003 212.4 L208.0 207.6 Z" fill="#ededeb" /><path d="M238.5 199 Q238.5 190.8 244.5 190.8 Q250.5 190.8 250.5 199 Q248 202.2 244.5 202.2 Q241 202.2 238.5 199 Z" fill="#9c8e72" /><ellipse cx="244.50" cy="195.00" rx="3.00" ry="2.40" fill="#8a8a8a" /><path d="M225.7 211.4 Q225.7 203.2 231.7 203.2 Q237.7 203.2 237.7 211.4 Q235 214.8 231.7 214.8 Q228.4 214.8 225.7 211.4 Z" fill="#5a5a5a" /><ellipse cx="255.10" cy="214.80" rx="3.00" ry="2.60" fill="#2a5a9a" /><rect x="275.20" y="176.50" width="2.60" height="4.60" fill="#ededeb" /><ellipse cx="276.50" cy="186.60" rx="6.30" ry="6.30" fill="#f0efec" /><rect x="263.20" y="192.80" width="2.20" height="2.80" fill="#333" /><path d="M263.4 195.4 H265.2 L271.6 204 L270.6 205.4 H258 L257 204 Z" fill="#ededeb" /><path d="M281.6 199.3 H284.2 L285.8 203.4 V217 H280 V203.4 Z" fill="#ededeb" /></g><rect x="199.00" y="207.70" width="8.90" height="8.90" fill="#f1f1f1" /><path d="M200.8 208.6 H204.0 Q205.4 209.29999999999998 205.6 210.7 L204.4 212.1 L205.6 213.5 Q205.4 214.89999999999998 204.0 215.6 H200.8 V214.2 L202.3 213.6 L200.8 213.0 V211.2 L202.3 210.6 L200.8 210.0 Z" fill="#1b96d6" /><path d="M203.9 209.39999999999998 Q206.5 210.1 206.4 212.1 Q206.5 214.1 203.9 214.79999999999998 Q204.9 212.1 203.9 209.39999999999998 Z" fill="#2b4a7c" /></g><rect x="295.00" y="130.60" width="91.30" height="97.10" fill="#8d8d8d" /><rect x="295.70" y="131.40" width="89.80" height="96.30" fill="#808080" /><rect x="295.00" y="217.40" width="91.30" height="10.30" fill="#93918f" /><g id="im12"><g transform="translate(0.00 0.00)"><defs><radialGradient id="g12" cx="0.55" cy="0.65" r="0.75"><stop offset="0" stop-color="#56564e"/><stop offset="0.6" stop-color="#41413d"/><stop offset="1" stop-color="#262624"/></radialGradient><radialGradient id="g12b" cx="0" cy="0" r="0.6"><stop offset="0" stop-color="#0c0c0c" stop-opacity="0.9"/><stop offset="1" stop-color="#0c0c0c" stop-opacity="0"/></radialGradient><clipPath id="c12"><rect x="296" y="140.3" width="90.1" height="66.5"/></clipPath></defs><rect x="296.00" y="140.30" width="90.10" height="66.50" fill="url(#g12)" /><rect x="296.00" y="140.30" width="90.10" height="66.50" fill="url(#g12b)" /><g clip-path="url(#c12)"><g filter="url(#b8)"><ellipse cx="316.00" cy="190.00" rx="19.00" ry="8.00" fill="#a08a5c" opacity="0.85"/><rect x="298.00" y="161.00" width="28.00" height="13.00" fill="#d8be8c" /><ellipse cx="311.00" cy="167.00" rx="9.00" ry="4.00" fill="#f4e4c0" /><ellipse cx="338.30" cy="181.70" rx="16.50" ry="6.50" fill="#c4ac7c" /></g><g filter="url(#b3)"><path d="M308.6 148.6 Q316.2 144.6 323.8 148.6 Q323.4 154.6 316.2 157.6 Q309 154.6 308.6 148.6 Z" fill="#b4aca0" /><ellipse cx="312.79" cy="148.62" rx="0.70" ry="0.60" fill="#dcd4c4" /><ellipse cx="320.62" cy="149.79" rx="0.70" ry="0.60" fill="#dcd4c4" /><ellipse cx="319.13" cy="151.39" rx="0.70" ry="0.60" fill="#f0ece4" /><ellipse cx="312.77" cy="147.67" rx="0.70" ry="0.60" fill="#f0ece4" /><ellipse cx="312.35" cy="153.88" rx="0.70" ry="0.60" fill="#5a544a" /><ellipse cx="312.66" cy="150.29" rx="0.70" ry="0.60" fill="#f0ece4" /><ellipse cx="315.89" cy="149.14" rx="0.70" ry="0.60" fill="#f0ece4" /><ellipse cx="320.43" cy="149.22" rx="0.70" ry="0.60" fill="#f0ece4" /><ellipse cx="316.23" cy="150.67" rx="0.70" ry="0.60" fill="#dcd4c4" /><ellipse cx="315.60" cy="150.61" rx="0.70" ry="0.60" fill="#f0ece4" /><ellipse cx="316.23" cy="151.00" rx="0.70" ry="0.60" fill="#f0ece4" /><ellipse cx="317.23" cy="150.81" rx="0.70" ry="0.60" fill="#f0ece4" /><ellipse cx="314.70" cy="155.29" rx="0.70" ry="0.60" fill="#dcd4c4" /><ellipse cx="319.04" cy="148.97" rx="0.70" ry="0.60" fill="#f0ece4" /><ellipse cx="320.31" cy="149.84" rx="0.70" ry="0.60" fill="#5a544a" /><ellipse cx="315.50" cy="152.58" rx="0.70" ry="0.60" fill="#f0ece4" /><ellipse cx="317.75" cy="150.52" rx="0.70" ry="0.60" fill="#5a544a" /><ellipse cx="314.98" cy="153.63" rx="0.70" ry="0.60" fill="#f0ece4" /><ellipse cx="312.46" cy="149.16" rx="0.70" ry="0.60" fill="#f0ece4" /><ellipse cx="314.28" cy="154.50" rx="0.70" ry="0.60" fill="#5a544a" /><ellipse cx="315.81" cy="150.20" rx="0.70" ry="0.60" fill="#5a544a" /><ellipse cx="316.10" cy="150.75" rx="0.70" ry="0.60" fill="#f0ece4" /><rect x="333.00" y="146.00" width="13.50" height="9.60" fill="#b89c74" /><path d="M334 155.6 H345.6 L342 159.6 H338 Z" fill="#a89274" /><ellipse cx="345.37" cy="150.18" rx="0.60" ry="0.70" fill="#6a5a40" /><ellipse cx="333.82" cy="154.48" rx="0.60" ry="0.70" fill="#6a5a40" /><ellipse cx="338.27" cy="155.01" rx="0.60" ry="0.70" fill="#6a5a40" /><ellipse cx="334.18" cy="148.41" rx="0.60" ry="0.70" fill="#f4e8d0" /><ellipse cx="335.08" cy="149.06" rx="0.60" ry="0.70" fill="#6a5a40" /><ellipse cx="337.87" cy="150.15" rx="0.60" ry="0.70" fill="#e8d4a8" /><ellipse cx="336.71" cy="151.23" rx="0.60" ry="0.70" fill="#e8d4a8" /><ellipse cx="342.88" cy="154.57" rx="0.60" ry="0.70" fill="#6a5a40" /><ellipse cx="334.05" cy="156.06" rx="0.60" ry="0.70" fill="#f4e8d0" /><ellipse cx="336.19" cy="151.73" rx="0.60" ry="0.70" fill="#6a5a40" /><ellipse cx="344.98" cy="150.00" rx="0.60" ry="0.70" fill="#e8d4a8" /><ellipse cx="340.36" cy="149.72" rx="0.60" ry="0.70" fill="#6a5a40" /><ellipse cx="337.40" cy="154.59" rx="0.60" ry="0.70" fill="#e8d4a8" /><ellipse cx="335.45" cy="153.49" rx="0.60" ry="0.70" fill="#6a5a40" /><ellipse cx="335.60" cy="147.09" rx="0.60" ry="0.70" fill="#e8d4a8" /><ellipse cx="340.22" cy="150.66" rx="0.60" ry="0.70" fill="#f4e8d0" /><ellipse cx="342.78" cy="150.04" rx="0.60" ry="0.70" fill="#6a5a40" /><ellipse cx="339.25" cy="150.82" rx="0.60" ry="0.70" fill="#f4e8d0" /><ellipse cx="345.74" cy="152.98" rx="0.60" ry="0.70" fill="#6a5a40" /><ellipse cx="337.74" cy="148.67" rx="0.60" ry="0.70" fill="#e8d4a8" /><ellipse cx="340.59" cy="147.93" rx="0.60" ry="0.70" fill="#6a5a40" /><ellipse cx="334.92" cy="150.95" rx="0.60" ry="0.70" fill="#f4e8d0" /><ellipse cx="334.33" cy="150.81" rx="0.60" ry="0.70" fill="#f4e8d0" /><ellipse cx="339.22" cy="156.59" rx="0.60" ry="0.70" fill="#f4e8d0" /><path d="M333 146H346.5" stroke="#d8bc84" stroke-width="0.8" fill="none" /><ellipse cx="365.40" cy="155.40" rx="12.60" ry="7.00" fill="#d6d6d2" /><ellipse cx="365.40" cy="154.20" rx="12.40" ry="5.40" fill="#c0c0bc" /><ellipse cx="365.40" cy="153.40" rx="9.00" ry="3.20" fill="#4a4a46" /><path d="M353 155.5Q365.4 164 377.8 155.5M353.4 152.6Q365.4 160.6 377.4 152.6" stroke="#f4f4f0" stroke-width="0.7" fill="none" /><rect x="353.60" y="154.40" width="0.40" height="3.40" fill="#8a8a86" /><rect x="354.94" y="155.06" width="0.40" height="3.40" fill="#8a8a86" /><rect x="356.28" y="155.70" width="0.40" height="3.40" fill="#8a8a86" /><rect x="357.62" y="156.30" width="0.40" height="3.40" fill="#8a8a86" /><rect x="358.96" y="156.83" width="0.40" height="3.40" fill="#8a8a86" /><rect x="360.30" y="157.27" width="0.40" height="3.40" fill="#8a8a86" /><rect x="361.64" y="157.62" width="0.40" height="3.40" fill="#8a8a86" /><rect x="362.98" y="157.86" width="0.40" height="3.40" fill="#8a8a86" /><rect x="364.32" y="157.98" width="0.40" height="3.40" fill="#8a8a86" /><rect x="365.66" y="157.98" width="0.40" height="3.40" fill="#8a8a86" /><rect x="367.00" y="157.86" width="0.40" height="3.40" fill="#8a8a86" /><rect x="368.34" y="157.62" width="0.40" height="3.40" fill="#8a8a86" /><rect x="369.68" y="157.27" width="0.40" height="3.40" fill="#8a8a86" /><rect x="371.02" y="156.83" width="0.40" height="3.40" fill="#8a8a86" /><rect x="372.36" y="156.30" width="0.40" height="3.40" fill="#8a8a86" /><rect x="373.70" y="155.70" width="0.40" height="3.40" fill="#8a8a86" /><rect x="375.04" y="155.06" width="0.40" height="3.40" fill="#8a8a86" /><rect x="376.38" y="154.40" width="0.40" height="3.40" fill="#8a8a86" /><rect x="338.40" y="162.40" width="3.60" height="2.40" fill="#2a2a26" /><ellipse cx="333.80" cy="168.40" rx="2.30" ry="2.20" fill="#e6dcc8" /><ellipse cx="337.60" cy="170.40" rx="2.30" ry="2.20" fill="#e6dcc8" /><ellipse cx="342.00" cy="170.80" rx="2.30" ry="2.20" fill="#e6dcc8" /><ellipse cx="346.20" cy="169.00" rx="2.30" ry="2.20" fill="#e6dcc8" /><ellipse cx="340.00" cy="166.60" rx="2.30" ry="2.20" fill="#e6dcc8" /><ellipse cx="335.80" cy="166.60" rx="2.30" ry="2.20" fill="#e6dcc8" /><ellipse cx="344.40" cy="166.40" rx="2.30" ry="2.20" fill="#e6dcc8" /><rect x="357.20" y="166.60" width="9.60" height="5.40" fill="#101010" /><ellipse cx="362.00" cy="172.00" rx="4.80" ry="1.20" fill="#e8e8e4" /><rect x="367.40" y="166.20" width="10.00" height="5.60" fill="#101010" /><ellipse cx="372.40" cy="171.80" rx="5.00" ry="1.20" fill="#e8e8e4" /><rect x="361.40" y="169.60" width="8.60" height="4.40" fill="#0c0c0c" /><ellipse cx="365.70" cy="174.00" rx="4.30" ry="1.10" fill="#f0f0ec" /><ellipse cx="338.30" cy="181.70" rx="15.60" ry="5.80" fill="#d0b888" opacity="0.8"/><ellipse cx="347.62" cy="181.20" rx="1.00" ry="0.70" fill="#a88c58" /><ellipse cx="335.33" cy="179.19" rx="1.00" ry="0.70" fill="#a88c58" /><ellipse cx="336.04" cy="184.65" rx="1.00" ry="0.70" fill="#ecdcb0" /><ellipse cx="347.95" cy="184.53" rx="1.00" ry="0.70" fill="#f4e8c8" /><ellipse cx="349.03" cy="180.74" rx="1.00" ry="0.70" fill="#a88c58" /><ellipse cx="342.29" cy="180.19" rx="1.00" ry="0.70" fill="#a88c58" /><ellipse cx="336.58" cy="185.90" rx="1.00" ry="0.70" fill="#f4e8c8" /><ellipse cx="330.32" cy="184.96" rx="1.00" ry="0.70" fill="#a88c58" /><ellipse cx="334.38" cy="178.03" rx="1.00" ry="0.70" fill="#a88c58" /><ellipse cx="330.63" cy="184.75" rx="1.00" ry="0.70" fill="#a88c58" /><ellipse cx="341.96" cy="179.57" rx="1.00" ry="0.70" fill="#f4e8c8" /><ellipse cx="335.36" cy="177.11" rx="1.00" ry="0.70" fill="#a88c58" /><ellipse cx="331.99" cy="178.75" rx="1.00" ry="0.70" fill="#ecdcb0" /><ellipse cx="326.15" cy="182.39" rx="1.00" ry="0.70" fill="#a88c58" /><ellipse cx="333.78" cy="178.83" rx="1.00" ry="0.70" fill="#f4e8c8" /><ellipse cx="330.77" cy="178.28" rx="1.00" ry="0.70" fill="#a88c58" /><ellipse cx="337.08" cy="184.49" rx="1.00" ry="0.70" fill="#a88c58" /><ellipse cx="330.75" cy="185.27" rx="1.00" ry="0.70" fill="#f4e8c8" /><ellipse cx="330.27" cy="182.60" rx="1.00" ry="0.70" fill="#a88c58" /><ellipse cx="328.18" cy="181.31" rx="1.00" ry="0.70" fill="#ecdcb0" /><ellipse cx="340.98" cy="184.44" rx="1.00" ry="0.70" fill="#a88c58" /><ellipse cx="337.50" cy="183.02" rx="1.00" ry="0.70" fill="#f4e8c8" /><ellipse cx="337.57" cy="179.73" rx="1.00" ry="0.70" fill="#f4e8c8" /><ellipse cx="324.82" cy="181.23" rx="1.00" ry="0.70" fill="#a88c58" /><ellipse cx="329.50" cy="178.74" rx="1.00" ry="0.70" fill="#f4e8c8" /><ellipse cx="336.50" cy="186.45" rx="1.00" ry="0.70" fill="#ecdcb0" /><path d="M357.2 181.4 Q369.5 178.6 381.8 181.4 V188 Q369.5 191.4 357.2 188 Z" fill="#cfcbc2" /><rect x="358.00" y="180.60" width="0.50" height="8.40" fill="#8e8a82" /><rect x="360.00" y="181.20" width="0.50" height="8.40" fill="#8e8a82" /><rect x="362.00" y="180.60" width="0.50" height="8.40" fill="#8e8a82" /><rect x="364.00" y="181.20" width="0.50" height="8.40" fill="#8e8a82" /><rect x="366.00" y="180.60" width="0.50" height="8.40" fill="#8e8a82" /><rect x="368.00" y="181.20" width="0.50" height="8.40" fill="#8e8a82" /><rect x="370.00" y="180.60" width="0.50" height="8.40" fill="#8e8a82" /><rect x="372.00" y="181.20" width="0.50" height="8.40" fill="#8e8a82" /><rect x="374.00" y="180.60" width="0.50" height="8.40" fill="#8e8a82" /><rect x="376.00" y="181.20" width="0.50" height="8.40" fill="#8e8a82" /><rect x="378.00" y="180.60" width="0.50" height="8.40" fill="#8e8a82" /><rect x="380.00" y="181.20" width="0.50" height="8.40" fill="#8e8a82" /><rect x="301.40" y="182.60" width="15.60" height="6.60" fill="#aaa294" /><ellipse cx="304.30" cy="185.58" rx="0.60" ry="0.60" fill="#e8e4dc" /><ellipse cx="305.15" cy="186.90" rx="0.60" ry="0.60" fill="#e8e4dc" /><ellipse cx="316.21" cy="188.49" rx="0.60" ry="0.60" fill="#e8e4dc" /><ellipse cx="302.78" cy="183.92" rx="0.60" ry="0.60" fill="#5a564c" /><ellipse cx="315.94" cy="185.81" rx="0.60" ry="0.60" fill="#e8e4dc" /><ellipse cx="307.98" cy="185.10" rx="0.60" ry="0.60" fill="#e8e4dc" /><ellipse cx="310.50" cy="184.48" rx="0.60" ry="0.60" fill="#5a564c" /><ellipse cx="302.01" cy="185.39" rx="0.60" ry="0.60" fill="#5a564c" /><ellipse cx="314.32" cy="187.88" rx="0.60" ry="0.60" fill="#5a564c" /><ellipse cx="315.89" cy="186.17" rx="0.60" ry="0.60" fill="#5a564c" /><ellipse cx="303.37" cy="186.14" rx="0.60" ry="0.60" fill="#5a564c" /><ellipse cx="315.70" cy="184.78" rx="0.60" ry="0.60" fill="#5a564c" /><ellipse cx="313.79" cy="185.46" rx="0.60" ry="0.60" fill="#5a564c" /><ellipse cx="308.73" cy="184.05" rx="0.60" ry="0.60" fill="#5a564c" /><ellipse cx="310.12" cy="188.37" rx="0.60" ry="0.60" fill="#e8e4dc" /><ellipse cx="310.76" cy="185.10" rx="0.60" ry="0.60" fill="#e8e4dc" /></g></g></g><rect x="296.70" y="207.70" width="8.90" height="8.90" fill="#f1f1f1" /><path d="M298.5 208.6 H301.7 Q303.09999999999997 209.29999999999998 303.3 210.7 L302.09999999999997 212.1 L303.3 213.5 Q303.09999999999997 214.89999999999998 301.7 215.6 H298.5 V214.2 L300.0 213.6 L298.5 213.0 V211.2 L300.0 210.6 L298.5 210.0 Z" fill="#1b96d6" /><path d="M301.59999999999997 209.39999999999998 Q304.2 210.1 304.09999999999997 212.1 Q304.2 214.1 301.59999999999997 214.79999999999998 Q302.59999999999997 212.1 301.59999999999997 209.39999999999998 Z" fill="#2b4a7c" /></g><rect x="392.90" y="130.60" width="91.30" height="97.10" fill="#8d8d8d" /><rect x="393.60" y="131.40" width="89.80" height="96.30" fill="#808080" /><rect x="392.90" y="217.40" width="91.30" height="10.30" fill="#93918f" /><g id="im13"><g transform="translate(0.00 0.00)"><rect x="393.90" y="132.20" width="89.80" height="84.80" fill="#eaeae8" /><rect x="393.90" y="132.20" width="89.80" height="5.40" fill="#d8d8d6" /><clipPath id="k4"><rect x="393.6" y="131.4" width="90.4" height="85.6"/></clipPath><g clip-path="url(#k4)"><g filter="url(#b20)"><ellipse cx="416.00" cy="160.00" rx="18.00" ry="14.00" fill="#f4f4f2" /><ellipse cx="462.00" cy="150.00" rx="16.00" ry="14.00" fill="#f6f6f4" /><ellipse cx="464.00" cy="200.00" rx="18.00" ry="14.00" fill="#f6f6f4" /><ellipse cx="414.00" cy="190.00" rx="14.00" ry="8.00" fill="#f2f2f0" /></g></g><rect x="413.40" y="132.00" width="2.80" height="5.60" fill="#c4a45e" /><path d="M414.8 137V148.6" stroke="#c4a45e" stroke-width="0.6" fill="none" /><path d="M396.5 146.3H418V148.8H435.8M399 153H420V155H433.8" stroke="#c4a45e" stroke-width="0.8" fill="none" /><path d="M396.5 146.3H403M429.8 148.8H435.8M399 153H406M427.8 155H433.8" stroke="#f6f0dc" stroke-width="0.9" fill="none" /><path d="M459.7 137V164.6" stroke="#b8a070" stroke-width="0.45" fill="none" /><rect x="458.80" y="135.60" width="1.80" height="1.60" fill="#c4a45e" /><path d="M442.5 164 L481.7 166.6 L481.7 169.4 L442.5 166.9 Z" fill="#fafaf6" /><path d="M442.5 164 L481.7 166.6" stroke="#c4a45e" stroke-width="0.7" fill="none" /><rect x="480.80" y="166.30" width="1.40" height="3.20" fill="#c4a45e" /><rect x="413.00" y="177.00" width="3.60" height="1.20" fill="#c4a45e" /><path d="M414.8 178.2L399.3 198M414.8 178.2L430.5 198" stroke="#7a6a4a" stroke-width="0.4" fill="none" /><rect x="398.10" y="197.90" width="34.70" height="8.60" fill="#a48850" /><rect x="398.60" y="197.90" width="1.00" height="8.60" fill="#3c3222" /><rect x="400.90" y="197.90" width="1.00" height="8.60" fill="#d8c088" /><rect x="403.20" y="197.90" width="1.00" height="8.60" fill="#3c3222" /><rect x="405.50" y="197.90" width="1.00" height="8.60" fill="#d8c088" /><rect x="407.80" y="197.90" width="1.00" height="8.60" fill="#3c3222" /><rect x="410.10" y="197.90" width="1.00" height="8.60" fill="#d8c088" /><rect x="412.40" y="197.90" width="1.00" height="8.60" fill="#3c3222" /><rect x="414.70" y="197.90" width="1.00" height="8.60" fill="#d8c088" /><rect x="417.00" y="197.90" width="1.00" height="8.60" fill="#3c3222" /><rect x="419.30" y="197.90" width="1.00" height="8.60" fill="#d8c088" /><rect x="421.60" y="197.90" width="1.00" height="8.60" fill="#3c3222" /><rect x="423.90" y="197.90" width="1.00" height="8.60" fill="#d8c088" /><rect x="426.20" y="197.90" width="1.00" height="8.60" fill="#3c3222" /><rect x="428.50" y="197.90" width="1.00" height="8.60" fill="#d8c088" /><rect x="430.80" y="197.90" width="1.00" height="8.60" fill="#3c3222" /><rect x="398.10" y="206.50" width="34.70" height="1.60" fill="#e0dcd0" opacity="0.7"/><path d="M448.7 177 Q460.6 174.6 472.5 177 V187 Q460.6 189.6 448.7 187 Z" fill="#b4965c" /><path d="M449 180Q454 178 458 181Q462 184 466 181Q469 179 472 181M449 184Q454 182 458 185Q462 188 466 185Q469 183 472 185" stroke="#5e4c2a" stroke-width="1.0" fill="none" /><path d="M448.7 177 Q460.6 174.6 472.5 177M448.7 187 Q460.6 189.6 472.5 187" stroke="#d8c08a" stroke-width="0.7" fill="none" /></g><rect x="394.60" y="207.70" width="8.90" height="8.90" fill="#f1f1f1" /><path d="M396.40000000000003 208.6 H399.6 Q401.0 209.29999999999998 401.20000000000005 210.7 L400.0 212.1 L401.20000000000005 213.5 Q401.0 214.89999999999998 399.6 215.6 H396.40000000000003 V214.2 L397.90000000000003 213.6 L396.40000000000003 213.0 V211.2 L397.90000000000003 210.6 L396.40000000000003 210.0 Z" fill="#1b96d6" /><path d="M399.5 209.39999999999998 Q402.1 210.1 402.0 212.1 Q402.1 214.1 399.5 214.79999999999998 Q400.5 212.1 399.5 209.39999999999998 Z" fill="#2b4a7c" /></g><rect x="99.60" y="234.80" width="91.30" height="97.10" fill="#8d8d8d" /><rect x="100.30" y="235.60" width="89.80" height="96.30" fill="#808080" /><rect x="99.60" y="321.60" width="91.30" height="10.30" fill="#93918f" /><g id="im20"><g transform="translate(0.00 0.00)"><defs><linearGradient id="g20" x1="0" y1="0" x2="1" y2="0"><stop offset="0" stop-color="#dadada"/><stop offset="0.25" stop-color="#f6f6f6"/><stop offset="0.8" stop-color="#fafafa"/><stop offset="1" stop-color="#e4e4e4"/></linearGradient></defs><rect x="100.00" y="248.80" width="90.60" height="58.60" fill="url(#g20)" /><path d="M130.7 252.3V263.6M132.4 252.3V263.6" stroke="#333" stroke-width="0.5" fill="none" /><rect x="130.20" y="252.00" width="2.80" height="0.80" fill="#333" /><path d="M131.5 264Q124 267.4 117 264.6L109.5 262M131.5 264Q139 267.4 146 264.6L153 262.4M131.5 264.4Q127 266.8 123.5 265M131.5 264.4Q137 266.8 143 265.4M112 265.6L126 266.8M140 266.4L150 264.8" stroke="#3a3a3a" stroke-width="0.5" fill="none" /><path d="M103.3 263.4L112.9 260.6L111.4 263.2Z" fill="#161616" /><path d="M112.3 260.6L121 259L118.4 262Z" fill="#161616" /><path d="M120.6 263.4L126 262.8L125 265.2Z" fill="#161616" /><path d="M138.6 259.6L146.4 258.2L142.4 261.8Z" fill="#161616" /><path d="M148.4 262.4L157.6 259.6L151.8 264Z" fill="#161616" /><path d="M140.8 264L147 262.8L145.2 265.2Z" fill="#161616" /><path d="M173.4 248.8V262" stroke="#b4b4b4" stroke-width="0.6" fill="none" /><path d="M171.6 262 H175.2 L174.4 271.6 H172.4 Z" fill="#bdbdbd" /><rect x="172.20" y="271.00" width="2.40" height="1.20" fill="#b09050" /><path d="M172 268C166 270 159.6 268 160 264.4C160.4 260.6 167 260 168.6 263.4C169.6 266 166 268.6 163.6 267.4M174.8 268C181 270 186.6 268 186.2 264.4C185.8 260.6 179.4 260 177.8 263.4C176.8 266 180.4 268.6 182.8 267.4M168.6 263.4C170 259.6 176.6 259.6 177.8 263.4" stroke="#8c8c8c" stroke-width="0.7" fill="none" /><rect x="123.60" y="276.00" width="1.60" height="1.40" fill="#b09050" /><rect x="123.80" y="277.40" width="1.20" height="5.00" fill="#e8e8e8" /><rect x="123.50" y="282.40" width="1.80" height="1.60" fill="#b09050" /><path d="M124.4 284V299.6" stroke="#444" stroke-width="0.7" fill="none" /><rect x="123.80" y="293.00" width="1.20" height="2.00" fill="#3a6ab0" /><rect x="123.90" y="297.60" width="1.00" height="2.20" fill="#3a6ab0" /><path d="M124.4 296Q120 300.6 115 296V293.6M124.4 296Q122 299.4 119.4 296V292M124.4 296Q128 300.6 130.6 296V294.4M124.4 296Q132 301.4 136.4 296V293" stroke="#b09050" stroke-width="0.55" fill="none" /><rect x="116.00" y="287.00" width="6.20" height="5.20" fill="#202020" /><rect x="133.00" y="287.50" width="6.40" height="5.50" fill="#202020" /><rect x="110.40" y="288.50" width="8.70" height="5.30" fill="#161616" /><rect x="127.40" y="289.00" width="6.20" height="5.50" fill="#161616" /><rect x="166.40" y="274.90" width="2.60" height="1.40" fill="#b09050" /><rect x="167.00" y="276.30" width="1.40" height="16.00" fill="#ecece8" /><path d="M156 299L168 300.6L180 299M161 297.6L168 300.6L175.6 297.6" stroke="#b09050" stroke-width="0.9" fill="none" /><ellipse cx="161.30" cy="291.00" rx="3.30" ry="3.30" fill="#d9d9d5" /><ellipse cx="160.70" cy="290.30" rx="2.38" ry="2.38" fill="#f0f0ec" /><ellipse cx="175.60" cy="291.40" rx="3.30" ry="3.30" fill="#d9d9d5" /><ellipse cx="175.00" cy="290.70" rx="2.38" ry="2.38" fill="#f0f0ec" /><ellipse cx="155.00" cy="294.00" rx="3.80" ry="3.80" fill="#d9d9d5" /><ellipse cx="154.40" cy="293.30" rx="2.74" ry="2.74" fill="#f0f0ec" /><ellipse cx="180.10" cy="294.40" rx="3.80" ry="3.80" fill="#d9d9d5" /><ellipse cx="179.50" cy="293.70" rx="2.74" ry="2.74" fill="#f0f0ec" /><ellipse cx="168.50" cy="295.20" rx="4.00" ry="4.00" fill="#d9d9d5" /><ellipse cx="167.90" cy="294.50" rx="2.88" ry="2.88" fill="#f0f0ec" /></g><rect x="101.30" y="311.90" width="8.90" height="8.90" fill="#f1f1f1" /><path d="M103.1 312.79999999999995 H106.3 Q107.7 313.5 107.89999999999999 314.9 L106.7 316.29999999999995 L107.89999999999999 317.7 Q107.7 319.09999999999997 106.3 319.79999999999995 H103.1 V318.4 L104.6 317.79999999999995 L103.1 317.2 V315.4 L104.6 314.79999999999995 L103.1 314.2 Z" fill="#1b96d6" /><path d="M106.2 313.59999999999997 Q108.8 314.29999999999995 108.7 316.29999999999995 Q108.8 318.29999999999995 106.2 319.0 Q107.2 316.29999999999995 106.2 313.59999999999997 Z" fill="#2b4a7c" /></g><rect x="197.30" y="234.80" width="91.30" height="97.10" fill="#8d8d8d" /><rect x="198.00" y="235.60" width="89.80" height="96.30" fill="#808080" /><rect x="197.30" y="321.60" width="91.30" height="10.30" fill="#93918f" /><g id="im21"><g transform="translate(0.00 0.00)"><defs><linearGradient id="g21" x1="0" y1="0" x2="0" y2="1"><stop offset="0" stop-color="#8a8a8a"/><stop offset="0.5" stop-color="#9a9a98"/><stop offset="0.8" stop-color="#a8a8a4"/><stop offset="1" stop-color="#b4b4b0"/></linearGradient><clipPath id="c21"><rect x="198" y="244.7" width="90.4" height="66.8"/></clipPath></defs><rect x="198.00" y="244.70" width="90.40" height="66.80" fill="url(#g21)" /><g clip-path="url(#c21)"><rect x="198.00" y="244.70" width="90.40" height="12.00" fill="#e4e4e4" /><rect x="198.00" y="256.20" width="90.40" height="0.80" fill="#c4c4c4" /><g filter="url(#b20)"><ellipse cx="215.00" cy="307.00" rx="10.00" ry="4.00" fill="#c4c4c0" /><ellipse cx="242.00" cy="307.00" rx="10.00" ry="4.00" fill="#ccc8bc" /><ellipse cx="272.00" cy="307.00" rx="10.00" ry="4.00" fill="#c4c4c0" /><ellipse cx="198.00" cy="285.00" rx="6.00" ry="30.00" fill="#7a7a7a" /></g><ellipse cx="213.70" cy="247.80" rx="2.60" ry="1.30" fill="#1a1a1a" /><path d="M213.7 248V253" stroke="#1a1a1a" stroke-width="1.1" fill="none" /><path d="M213.7 253V283" stroke="#2c2c2c" stroke-width="0.6" fill="none" /><ellipse cx="241.80" cy="247.80" rx="2.60" ry="1.30" fill="#1a1a1a" /><path d="M241.8 248V253" stroke="#1a1a1a" stroke-width="1.1" fill="none" /><path d="M241.8 253V280.4" stroke="#2c2c2c" stroke-width="0.6" fill="none" /><ellipse cx="272.10" cy="247.80" rx="2.60" ry="1.30" fill="#1a1a1a" /><path d="M272.1 248V253" stroke="#1a1a1a" stroke-width="1.1" fill="none" /><path d="M272.1 253V282.4" stroke="#2c2c2c" stroke-width="0.6" fill="none" /><g filter="url(#b3)"><ellipse cx="214.30" cy="291.90" rx="8.90" ry="9.60" fill="#d4d4d4" /><path d="M206.6 287.4 Q212 280.6 219.4 283.4 Q225 288.6 222.6 297 Q221 299.6 219.4 300 Q221 292 216 288.6 Q211 286.6 206.6 287.4 Z" fill="#1e1e1e" /><path d="M206 290 Q210 288 214.6 290.6 Q216.4 294.6 213.6 298 Q209 298.6 206.4 295 Z" fill="#f2f2f2" /><path d="M208.4 298.6 Q214 302.4 219.6 299.4 Q216 296.4 213.4 298 Z" fill="#8a8a8a" /><ellipse cx="241.50" cy="291.30" rx="9.60" ry="10.60" fill="#d8c088" /><ellipse cx="235.84" cy="293.27" rx="1.70" ry="1.30" fill="#fff8e4" transform="rotate(115 235.8 293.3)"/><ellipse cx="235.40" cy="290.97" rx="1.70" ry="1.30" fill="#f4e6c0" transform="rotate(131 235.4 291.0)"/><ellipse cx="235.31" cy="292.37" rx="1.70" ry="1.30" fill="#f4e6c0" transform="rotate(24 235.3 292.4)"/><ellipse cx="239.04" cy="292.26" rx="1.70" ry="1.30" fill="#e2c884" transform="rotate(177 239.0 292.3)"/><ellipse cx="237.40" cy="286.16" rx="1.70" ry="1.30" fill="#fff8e4" transform="rotate(115 237.4 286.2)"/><ellipse cx="237.93" cy="285.52" rx="1.70" ry="1.30" fill="#f4e6c0" transform="rotate(159 237.9 285.5)"/><ellipse cx="247.20" cy="291.90" rx="1.70" ry="1.30" fill="#fffdf4" transform="rotate(9 247.2 291.9)"/><ellipse cx="242.82" cy="295.03" rx="1.70" ry="1.30" fill="#fffdf4" transform="rotate(118 242.8 295.0)"/><ellipse cx="238.68" cy="297.39" rx="1.70" ry="1.30" fill="#f4e6c0" transform="rotate(132 238.7 297.4)"/><ellipse cx="241.92" cy="295.79" rx="1.70" ry="1.30" fill="#fffdf4" transform="rotate(169 241.9 295.8)"/><ellipse cx="247.11" cy="295.01" rx="1.70" ry="1.30" fill="#fff8e4" transform="rotate(141 247.1 295.0)"/><ellipse cx="249.06" cy="291.04" rx="1.70" ry="1.30" fill="#c89c48" transform="rotate(80 249.1 291.0)"/><ellipse cx="241.77" cy="285.01" rx="1.70" ry="1.30" fill="#fffdf4" transform="rotate(17 241.8 285.0)"/><ellipse cx="239.46" cy="290.35" rx="1.70" ry="1.30" fill="#fffdf4" transform="rotate(74 239.5 290.3)"/><ellipse cx="235.31" cy="297.30" rx="1.70" ry="1.30" fill="#fffdf4" transform="rotate(54 235.3 297.3)"/><ellipse cx="243.49" cy="299.90" rx="1.70" ry="1.30" fill="#fff8e4" transform="rotate(96 243.5 299.9)"/><ellipse cx="246.29" cy="290.62" rx="1.70" ry="1.30" fill="#fffdf4" transform="rotate(144 246.3 290.6)"/><ellipse cx="236.52" cy="285.43" rx="1.70" ry="1.30" fill="#c89c48" transform="rotate(86 236.5 285.4)"/><ellipse cx="245.21" cy="293.83" rx="1.70" ry="1.30" fill="#fff8e4" transform="rotate(30 245.2 293.8)"/><ellipse cx="246.03" cy="297.01" rx="1.70" ry="1.30" fill="#fffdf4" transform="rotate(15 246.0 297.0)"/><ellipse cx="236.18" cy="292.64" rx="1.70" ry="1.30" fill="#e2c884" transform="rotate(48 236.2 292.6)"/><ellipse cx="238.56" cy="292.43" rx="1.70" ry="1.30" fill="#f4e6c0" transform="rotate(107 238.6 292.4)"/><ellipse cx="240.06" cy="289.27" rx="1.70" ry="1.30" fill="#fff8e4" transform="rotate(54 240.1 289.3)"/><ellipse cx="249.20" cy="291.33" rx="1.70" ry="1.30" fill="#e2c884" transform="rotate(77 249.2 291.3)"/><ellipse cx="242.29" cy="291.29" rx="1.70" ry="1.30" fill="#f4e6c0" transform="rotate(100 242.3 291.3)"/><ellipse cx="247.69" cy="291.10" rx="1.70" ry="1.30" fill="#e2c884" transform="rotate(25 247.7 291.1)"/><ellipse cx="244.06" cy="292.08" rx="1.70" ry="1.30" fill="#fff8e4" transform="rotate(66 244.1 292.1)"/><ellipse cx="247.73" cy="291.72" rx="1.70" ry="1.30" fill="#c89c48" transform="rotate(98 247.7 291.7)"/><ellipse cx="243.28" cy="292.29" rx="1.70" ry="1.30" fill="#e2c884" transform="rotate(162 243.3 292.3)"/><ellipse cx="241.78" cy="298.22" rx="1.70" ry="1.30" fill="#c89c48" transform="rotate(159 241.8 298.2)"/><ellipse cx="233.66" cy="293.97" rx="1.70" ry="1.30" fill="#fff8e4" transform="rotate(147 233.7 294.0)"/><ellipse cx="244.62" cy="295.30" rx="1.70" ry="1.30" fill="#f4e6c0" transform="rotate(79 244.6 295.3)"/><ellipse cx="247.73" cy="286.75" rx="1.70" ry="1.30" fill="#f4e6c0" transform="rotate(48 247.7 286.7)"/><ellipse cx="244.96" cy="297.27" rx="1.70" ry="1.30" fill="#e2c884" transform="rotate(50 245.0 297.3)"/><ellipse cx="239.65" cy="286.39" rx="1.70" ry="1.30" fill="#fff8e4" transform="rotate(154 239.7 286.4)"/><ellipse cx="242.69" cy="292.01" rx="1.70" ry="1.30" fill="#fffdf4" transform="rotate(9 242.7 292.0)"/><ellipse cx="237.81" cy="290.99" rx="1.70" ry="1.30" fill="#fff8e4" transform="rotate(65 237.8 291.0)"/><ellipse cx="234.55" cy="295.54" rx="1.70" ry="1.30" fill="#fff8e4" transform="rotate(75 234.6 295.5)"/><ellipse cx="233.52" cy="290.18" rx="1.70" ry="1.30" fill="#fffdf4" transform="rotate(32 233.5 290.2)"/><ellipse cx="242.31" cy="297.87" rx="1.70" ry="1.30" fill="#e2c884" transform="rotate(157 242.3 297.9)"/><ellipse cx="244.46" cy="292.97" rx="1.70" ry="1.30" fill="#f4e6c0" transform="rotate(4 244.5 293.0)"/><ellipse cx="245.97" cy="293.62" rx="1.70" ry="1.30" fill="#f4e6c0" transform="rotate(15 246.0 293.6)"/><ellipse cx="245.26" cy="292.57" rx="1.70" ry="1.30" fill="#e2c884" transform="rotate(146 245.3 292.6)"/><ellipse cx="243.48" cy="290.91" rx="1.70" ry="1.30" fill="#f4e6c0" transform="rotate(115 243.5 290.9)"/><ellipse cx="247.98" cy="290.38" rx="1.70" ry="1.30" fill="#e2c884" transform="rotate(149 248.0 290.4)"/><ellipse cx="247.28" cy="289.04" rx="1.70" ry="1.30" fill="#fffdf4" transform="rotate(121 247.3 289.0)"/><path d="M262.6 284.4 Q272.1 280.6 281.6 284.4 Q283.4 292 281 299.6 Q272.1 303.4 263.2 299.6 Q260.8 292 262.6 284.4 Z" fill="#6e6e6c" /><ellipse cx="272.10" cy="293.00" rx="4.60" ry="5.60" fill="#a89a80" /><ellipse cx="272.40" cy="293.40" rx="1.20" ry="1.50" fill="#ffe8b0" /><path d="M263.2 284.3Q264.0 292 263.2 299.5" stroke="#2a2a2a" stroke-width="0.6" fill="none" /><path d="M265.0 284.1Q265.8 292 265.0 299.7" stroke="#c4c4c0" stroke-width="0.6" fill="none" /><path d="M266.8 283.9Q267.6 292 266.8 299.9" stroke="#2a2a2a" stroke-width="0.6" fill="none" /><path d="M268.5 283.8Q269.3 292 268.5 300.0" stroke="#c4c4c0" stroke-width="0.6" fill="none" /><path d="M270.3 283.6Q271.1 292 270.3 300.2" stroke="#2a2a2a" stroke-width="0.6" fill="none" /><path d="M272.1 283.4Q271.3 292 272.1 300.4" stroke="#c4c4c0" stroke-width="0.6" fill="none" /><path d="M273.9 283.6Q273.1 292 273.9 300.2" stroke="#2a2a2a" stroke-width="0.6" fill="none" /><path d="M275.7 283.8Q274.9 292 275.7 300.0" stroke="#c4c4c0" stroke-width="0.6" fill="none" /><path d="M277.4 283.9Q276.6 292 277.4 299.9" stroke="#2a2a2a" stroke-width="0.6" fill="none" /><path d="M279.2 284.1Q278.4 292 279.2 299.7" stroke="#c4c4c0" stroke-width="0.6" fill="none" /><path d="M281.0 284.3Q280.2 292 281.0 299.5" stroke="#2a2a2a" stroke-width="0.6" fill="none" /><path d="M262.6 284.4 Q272.1 287.6 281.6 284.4M263.2 299.6Q272.1 296.6 281 299.6" stroke="#3a3a3a" stroke-width="0.6" fill="none" /></g></g></g><rect x="199.00" y="311.90" width="8.90" height="8.90" fill="#f1f1f1" /><path d="M200.8 312.79999999999995 H204.0 Q205.4 313.5 205.6 314.9 L204.4 316.29999999999995 L205.6 317.7 Q205.4 319.09999999999997 204.0 319.79999999999995 H200.8 V318.4 L202.3 317.79999999999995 L200.8 317.2 V315.4 L202.3 314.79999999999995 L200.8 314.2 Z" fill="#1b96d6" /><path d="M203.9 313.59999999999997 Q206.5 314.29999999999995 206.4 316.29999999999995 Q206.5 318.29999999999995 203.9 319.0 Q204.9 316.29999999999995 203.9 313.59999999999997 Z" fill="#2b4a7c" /></g><rect x="295.00" y="234.80" width="91.30" height="97.10" fill="#8d8d8d" /><rect x="295.70" y="235.60" width="89.80" height="96.30" fill="#808080" /><rect x="295.00" y="321.60" width="91.30" height="10.30" fill="#93918f" /><g id="im22"><g transform="translate(0.00 0.00)"><defs><linearGradient id="g22" x1="0" y1="0" x2="1" y2="0"><stop offset="0" stop-color="#f2f2f2"/><stop offset="0.3" stop-color="#e6e6e6"/><stop offset="0.75" stop-color="#dedede"/><stop offset="1" stop-color="#e6e6e6"/></linearGradient></defs><rect x="296.00" y="243.70" width="90.30" height="69.00" fill="url(#g22)" /><clipPath id="k5"><rect x="296" y="243.7" width="90.3" height="69"/></clipPath><g clip-path="url(#k5)"><g filter="url(#b20)"><ellipse cx="352.00" cy="300.00" rx="30.00" ry="9.00" fill="#f2f2f2" /><ellipse cx="306.00" cy="300.00" rx="10.00" ry="10.00" fill="#f6f6f6" /></g></g><path d="M301.1 243.7V284M307.5 243.7V290M317.2 243.7V289.4M323.5 243.7V284M335.2 243.7V283.8M348.2 243.7V290.6M359.3 243.7V290.6M366.4 243.7V290.6M379.5 243.7V290.6" stroke="#9c9c9c" stroke-width="0.5" fill="none" /><path d="M299 284.6L312.2 293.6L325.1 284.6" stroke="#4a4234" stroke-width="0.7" fill="none" /><path d="M335 285H344.5V291.6H350.6" stroke="#8a8a88" stroke-width="1.0" fill="none" /><path d="M357 292.6H382" stroke="#8a8a88" stroke-width="0.9" fill="none" /><ellipse cx="300.60" cy="285.20" rx="1.00" ry="0.80" fill="#fff6dc" /><rect x="299.60" y="283.80" width="2.00" height="0.80" fill="#4a4234" /><ellipse cx="307.60" cy="290.60" rx="1.00" ry="0.80" fill="#fff6dc" /><rect x="306.60" y="289.20" width="2.00" height="0.80" fill="#4a4234" /><ellipse cx="317.00" cy="290.00" rx="1.00" ry="0.80" fill="#fff6dc" /><rect x="316.00" y="288.60" width="2.00" height="0.80" fill="#4a4234" /><ellipse cx="324.00" cy="285.20" rx="1.00" ry="0.80" fill="#fff6dc" /><rect x="323.00" y="283.80" width="2.00" height="0.80" fill="#4a4234" /><ellipse cx="334.60" cy="286.40" rx="1.60" ry="1.40" fill="#fff8e6" /><path d="M333.0 286.4 A1.6 1.4 0 0 0 336.20000000000005 286.4 Z" fill="#e8c88a" /><rect x="333.40" y="284.00" width="2.40" height="1.00" fill="#6a6458" /><ellipse cx="348.40" cy="293.00" rx="1.60" ry="1.40" fill="#fff8e6" /><path d="M346.79999999999995 293 A1.6 1.4 0 0 0 350.0 293 Z" fill="#e8c88a" /><rect x="347.20" y="290.60" width="2.40" height="1.00" fill="#6a6458" /><ellipse cx="359.30" cy="293.20" rx="1.60" ry="1.40" fill="#fff8e6" /><path d="M357.7 293.2 A1.6 1.4 0 0 0 360.90000000000003 293.2 Z" fill="#e8c88a" /><rect x="358.10" y="290.80" width="2.40" height="1.00" fill="#6a6458" /><ellipse cx="366.40" cy="293.20" rx="1.60" ry="1.40" fill="#fff8e6" /><path d="M364.79999999999995 293.2 A1.6 1.4 0 0 0 368.0 293.2 Z" fill="#e8c88a" /><rect x="365.20" y="290.80" width="2.40" height="1.00" fill="#6a6458" /><ellipse cx="379.50" cy="293.20" rx="1.60" ry="1.40" fill="#fff8e6" /><path d="M377.9 293.2 A1.6 1.4 0 0 0 381.1 293.2 Z" fill="#e8c88a" /><rect x="378.30" y="290.80" width="2.40" height="1.00" fill="#6a6458" /></g><rect x="296.70" y="311.90" width="8.90" height="8.90" fill="#f1f1f1" /><path d="M298.5 312.79999999999995 H301.7 Q303.09999999999997 313.5 303.3 314.9 L302.09999999999997 316.29999999999995 L303.3 317.7 Q303.09999999999997 319.09999999999997 301.7 319.79999999999995 H298.5 V318.4 L300.0 317.79999999999995 L298.5 317.2 V315.4 L300.0 314.79999999999995 L298.5 314.2 Z" fill="#1b96d6" /><path d="M301.59999999999997 313.59999999999997 Q304.2 314.29999999999995 304.09999999999997 316.29999999999995 Q304.2 318.29999999999995 301.59999999999997 319.0 Q302.59999999999997 316.29999999999995 301.59999999999997 313.59999999999997 Z" fill="#2b4a7c" /></g><rect x="392.90" y="234.80" width="91.30" height="97.10" fill="#8d8d8d" /><rect x="393.60" y="235.60" width="89.80" height="96.30" fill="#808080" /><rect x="392.90" y="321.60" width="91.30" height="10.30" fill="#93918f" /><g id="im23"><g transform="translate(0.00 0.00)"><rect x="406.20" y="235.70" width="64.50" height="86.30" fill="#ffffff" /><rect x="422.20" y="236.00" width="2.00" height="1.60" fill="#3a3028" /><path d="M423.2 237V244" stroke="#3a3028" stroke-width="0.8" fill="none" /><path d="M423.2 242L410.3 260.4M423.2 242L435.9 260.4" stroke="#3a3028" stroke-width="0.7" fill="none" /><path d="M423.2 244V262" stroke="#e8e4d8" stroke-width="1.0" fill="none" /><rect x="409.10" y="261.20" width="27.70" height="7.90" fill="#b4a484" /><path d="M409.1 261.5H436.8M409.1 268.8H436.8" stroke="#3a3028" stroke-width="0.9" fill="none" /><path d="M410 263.2H436M410 265.2H436M410 267H436" stroke="#7a6a54" stroke-width="0.5" fill="none" stroke-dasharray="1 0.8"/><path d="M418 270V273.4M420.8 270V274M423.4 270V274.4M426 270V274M428.6 270V273.4M417 272.6Q423.4 276 429.6 272.6" stroke="#3a3028" stroke-width="0.7" fill="none" /><rect x="446.50" y="235.70" width="11.60" height="1.20" fill="#2c2c2c" /><path d="M452.4 236.6V262.2" stroke="#333" stroke-width="0.7" fill="none" /><rect x="440.30" y="262.20" width="22.50" height="8.90" fill="#e4e4e0" /><rect x="444.00" y="263.80" width="15.20" height="5.60" fill="#f8f8f6" /><rect x="440.3" y="262.2" width="22.5" height="8.9" fill="none" stroke="#2e2e2e" stroke-width="0.9"/><path d="M443.6 262.2V271.1M459.6 262.2V271.1M440.3 263.6H462.8M440.3 269.8H462.8" stroke="#2e2e2e" stroke-width="0.6" fill="none" /><ellipse cx="422.80" cy="279.90" rx="3.20" ry="0.90" fill="#c49a3a" /><path d="M422.8 280V303.8" stroke="#c49a3a" stroke-width="0.5" fill="none" /><path d="M410.7 305 Q422.7 302.6 434.7 305 V315.2 Q422.7 317.8 410.7 315.2 Z" fill="#cfa648" /><path d="M410.7 306.6Q422.7 309 434.7 306.6M410.7 308.8Q422.7 311.2 434.7 308.8M410.7 311Q422.7 313.4 434.7 311M410.7 313.2Q422.7 315.6 434.7 313.2" stroke="#f0dc98" stroke-width="0.6" fill="none" /><path d="M410.7 305 Q422.7 302.6 434.7 305M410.7 315.2 Q422.7 317.8 434.7 315.2" stroke="#a07a24" stroke-width="0.6" fill="none" /><ellipse cx="451.40" cy="275.80" rx="3.60" ry="1.00" fill="#3a3028" /><path d="M451.4 276V305" stroke="#3a3028" stroke-width="0.7" fill="none" /><rect x="443.00" y="309.00" width="17.00" height="7.00" fill="#ecebe6" /><path d="M437.4 306.2Q451.6 303.4 465.9 306.2V316Q451.6 318.8 437.4 316ZM437.4 309.4Q451.6 312 465.9 309.4M437.4 312.6Q451.6 315.4 465.9 312.6M441.6 305.6V317M447 305V318M456 305V318M461.6 305.6V317M443 309H460V316H443Z" stroke="#3a3028" stroke-width="0.6" fill="none" /></g><rect x="394.60" y="311.90" width="8.90" height="8.90" fill="#f1f1f1" /><path d="M396.40000000000003 312.79999999999995 H399.6 Q401.0 313.5 401.20000000000005 314.9 L400.0 316.29999999999995 L401.20000000000005 317.7 Q401.0 319.09999999999997 399.6 319.79999999999995 H396.40000000000003 V318.4 L397.90000000000003 317.79999999999995 L396.40000000000003 317.2 V315.4 L397.90000000000003 314.79999999999995 L396.40000000000003 314.2 Z" fill="#1b96d6" /><path d="M399.5 313.59999999999997 Q402.1 314.29999999999995 402.0 316.29999999999995 Q402.1 318.29999999999995 399.5 319.0 Q400.5 316.29999999999995 399.5 313.59999999999997 Z" fill="#2b4a7c" /></g><rect x="99.60" y="339.40" width="91.30" height="97.10" fill="#8d8d8d" /><rect x="100.30" y="340.20" width="89.80" height="96.30" fill="#808080" /><rect x="99.60" y="426.20" width="91.30" height="10.30" fill="#93918f" /><g id="im30"><g transform="translate(0.00 0.00)"><defs><linearGradient id="g30" x1="0" y1="0" x2="1" y2="0"><stop offset="0" stop-color="#dcdcdc"/><stop offset="0.35" stop-color="#f3f3f3"/><stop offset="1" stop-color="#f6f6f6"/></linearGradient></defs><rect x="100.00" y="352.30" width="51.50" height="60.80" fill="url(#g30)" /><rect x="151.50" y="352.30" width="38.90" height="60.80" fill="#131b2f" /><clipPath id="k6"><rect x="151.5" y="352.3" width="38.9" height="60.8"/></clipPath><g clip-path="url(#k6)"><g filter="url(#b20)"><ellipse cx="172.00" cy="385.00" rx="12.00" ry="18.00" fill="#1a2742" /></g></g><path d="M108.5 352.3V377.5M117.4 352.3V375M122 352.3V367M127.5 352.3V380M133.4 352.3V369M139.6 352.3V369M144.5 352.3V379" stroke="#8a8a8a" stroke-width="0.4" fill="none" /><path d="M114.3 352.3V364" stroke="#8a8a8a" stroke-width="0.4" fill="none" /><path d="M114.3 364V387" stroke="#a0a0a0" stroke-width="0.4" fill="none" /><rect x="107.50" y="377.50" width="2.00" height="5.80" fill="#6a6e78" /><ellipse cx="108.50" cy="384.60" rx="3.60" ry="1.60" fill="#d4d4d4" /><rect x="115.40" y="375.10" width="2.40" height="5.60" fill="#1c1c1c" /><path d="M111.2 381.2 Q117 379.6 122.8 381.2 V382.6 Q117 383.6 111.2 382.6 Z" fill="#1a1a1a" /><rect x="121.50" y="367.00" width="1.00" height="4.00" fill="#c09a58" /><ellipse cx="122.00" cy="372.90" rx="1.80" ry="1.80" fill="#f4f4f4" /><circle cx="122" cy="372.9" r="1.8" fill="none" stroke="#aaa" stroke-width="0.3"/><rect x="126.40" y="380.00" width="1.60" height="4.60" fill="#3a4a6a" /><path d="M119.7 391.2 Q120.5 384.4 127.2 384.4 Q133.8 384.4 134.4 391.2 Q127.2 392.6 119.7 391.2 Z" fill="#e3e3e3" /><path d="M119.7 391.2 Q127.2 389.6 134.4 391.2 Q127.2 392.6 119.7 391.2 Z" fill="#b8b8b8" /><rect x="113.60" y="387.50" width="1.40" height="6.00" fill="#c09a58" /><path d="M106 401 Q107 393.3 114.3 393.3 Q121.6 393.3 122.5 401 Q114.3 403.2 106 401 Z" fill="#3b4556" /><path d="M106 401 Q114.3 398.8 122.5 401 Q114.3 403.2 106 401 Z" fill="#2a3242" /><rect x="132.80" y="369.00" width="1.20" height="2.20" fill="#444" /><path d="M132.6 371.2 H134.2 L135 374.8 H131.8 Z" fill="#f0f0f0" /><rect x="139.00" y="367.60" width="1.20" height="2.40" fill="#555" /><circle cx="139.6" cy="372" r="2" fill="#fafafa" stroke="#666" stroke-width="0.4"/><rect x="136.00" y="372.60" width="1.00" height="2.80" fill="#c09a58" /><path d="M136 375.1 H137 L140.8 380.2 Q136.5 381.6 132.5 380.2 Z" fill="#1f2e50" /><rect x="143.80" y="379.00" width="1.30" height="6.20" fill="#3a5a8a" /><circle cx="144.2" cy="387.4" r="2.1" fill="#fafafa" stroke="#444" stroke-width="0.5"/><path d="M156.2 352.3V369.7M161.3 352.3V390M165.6 352.3V378.7M174.3 352.3V379" stroke="#5a5a5a" stroke-width="0.4" fill="none" /><rect x="155.40" y="369.70" width="1.80" height="3.80" fill="#b4b4b4" /><path d="M153 375.6 Q153.6 373.4 156.3 373.4 Q159 373.4 159.7 375.6 Z" fill="#0c0c0c" /><rect x="163.90" y="378.70" width="3.60" height="4.20" fill="#c6a566" /><rect x="163.90" y="380.00" width="3.60" height="0.60" fill="#8a6e3a" /><rect x="173.50" y="379.00" width="1.60" height="4.50" fill="#b8955a" /><path d="M167 389 Q168 382.4 175.3 382.4 Q182.6 382.4 183.6 389 Q175.3 391 167 389 Z" fill="#b9965a" /><path d="M167 389 Q175.3 387 183.6 389 Q175.3 391 167 389 Z" fill="#8a6c3a" /><ellipse cx="173.00" cy="385.40" rx="3.40" ry="1.60" fill="#d4b47a" opacity="0.7"/><rect x="160.70" y="390.20" width="1.30" height="5.20" fill="#c09a58" /><path d="M160.7 395.3 H162 L166.5 400.8 Q161.7 402.4 156.9 400.8 Z" fill="#e9e9e9" /></g><rect x="101.30" y="416.50" width="8.90" height="8.90" fill="#f1f1f1" /><path d="M103.1 417.3999999999999 H106.3 Q107.7 418.09999999999997 107.89999999999999 419.49999999999994 L106.7 420.8999999999999 L107.89999999999999 422.29999999999995 Q107.7 423.69999999999993 106.3 424.3999999999999 H103.1 V422.99999999999994 L104.6 422.3999999999999 L103.1 421.79999999999995 V419.99999999999994 L104.6 419.3999999999999 L103.1 418.79999999999995 Z" fill="#1b96d6" /><path d="M106.2 418.19999999999993 Q108.8 418.8999999999999 108.7 420.8999999999999 Q108.8 422.8999999999999 106.2 423.59999999999997 Q107.2 420.8999999999999 106.2 418.19999999999993 Z" fill="#2b4a7c" /></g><rect x="197.30" y="339.40" width="91.30" height="97.10" fill="#8d8d8d" /><rect x="198.00" y="340.20" width="89.80" height="96.30" fill="#808080" /><rect x="197.30" y="426.20" width="91.30" height="10.30" fill="#93918f" /><g id="im31"><g transform="translate(0.00 0.00)"><rect x="207.20" y="340.40" width="35.30" height="34.30" fill="#e3e3e6" /><rect x="242.50" y="340.40" width="35.40" height="34.30" fill="#cdcdd1" /><rect x="207.20" y="374.70" width="28.50" height="26.90" fill="#c6c6ca" /><rect x="235.70" y="374.70" width="11.70" height="33.60" fill="#d1d1d5" /><rect x="247.40" y="374.70" width="30.50" height="54.00" fill="#d9d9dd" /><rect x="207.20" y="401.60" width="28.50" height="27.00" fill="#b6b6ba" /><rect x="235.70" y="408.30" width="11.70" height="20.40" fill="#b6b6ba" /><clipPath id="k7"><rect x="207.2" y="340.4" width="70.7" height="34.3"/></clipPath><g clip-path="url(#k7)"><g filter="url(#b20)"><ellipse cx="262.00" cy="352.00" rx="12.00" ry="10.00" fill="#e8e8ea" /><ellipse cx="224.00" cy="350.00" rx="10.00" ry="8.00" fill="#efeff1" /></g></g><path d="M226.6 340.4V358.4" stroke="#b89858" stroke-width="0.7" fill="none" /><path d="M226.6 358Q220 356 213.9 366M226.6 358Q222 357 220 360M226.6 358Q233 356 237.8 365.4M226.6 358Q231 357 233.1 360M226.6 358V367" stroke="#8a7040" stroke-width="0.6" fill="none" /><ellipse cx="213.90" cy="368.20" rx="2.60" ry="2.60" fill="#f6f6f4" /><path d="M211.3 368.2 A2.6 2.6 0 0 1 216.5 368.2 Z" fill="#1a1a1a" /><ellipse cx="220.00" cy="362.00" rx="2.30" ry="2.30" fill="#f6f6f4" /><path d="M217.7 362 A2.3 2.3 0 0 1 222.3 362 Z" fill="#1a1a1a" /><ellipse cx="226.60" cy="360.40" rx="2.10" ry="2.10" fill="#f6f6f4" /><path d="M224.5 360.4 A2.1 2.1 0 0 1 228.7 360.4 Z" fill="#1a1a1a" /><ellipse cx="233.10" cy="362.00" rx="2.30" ry="2.30" fill="#f6f6f4" /><path d="M230.79999999999998 362 A2.3 2.3 0 0 1 235.4 362 Z" fill="#1a1a1a" /><ellipse cx="237.80" cy="367.60" rx="2.60" ry="2.60" fill="#f6f6f4" /><path d="M235.20000000000002 367.6 A2.6 2.6 0 0 1 240.4 367.6 Z" fill="#1a1a1a" /><ellipse cx="226.60" cy="369.60" rx="2.60" ry="2.60" fill="#f6f6f4" /><path d="M224.0 369.6 A2.6 2.6 0 0 1 229.2 369.6 Z" fill="#1a1a1a" /><rect x="244.90" y="353.90" width="3.20" height="10.10" fill="#f8f6f0" rx="1.6"/><rect x="248.40" y="349.00" width="2.80" height="13.00" fill="#f8f6f0" rx="1.4"/><rect x="252.80" y="343.70" width="3.80" height="13.70" fill="#f8f6f0" rx="1.9"/><rect x="256.20" y="357.00" width="2.80" height="9.00" fill="#f8f6f0" rx="1.4"/><rect x="262.80" y="351.00" width="3.00" height="11.00" fill="#f8f6f0" rx="1.5"/><rect x="265.50" y="353.00" width="3.60" height="13.00" fill="#f8f6f0" rx="1.8"/><rect x="269.60" y="355.00" width="2.80" height="9.00" fill="#f8f6f0" rx="1.4"/><rect x="272.20" y="346.60" width="3.40" height="9.70" fill="#f8f6f0" rx="1.7"/><path d="M246 365.5H275M248 365.5V369.6H273V365.5M260.5 362V372" stroke="#b89858" stroke-width="0.7" fill="none" /><path d="M214.8 379.8L228.6 395.1M229 380.4L213.9 396.1M220.9 376.7V388" stroke="#b89858" stroke-width="1.6" fill="none" /><ellipse cx="220.90" cy="387.90" rx="2.60" ry="2.60" fill="#b89858" /><ellipse cx="214.80" cy="379.80" rx="3.60" ry="3.60" fill="#f8f8f8" /><ellipse cx="229.00" cy="380.40" rx="3.80" ry="3.80" fill="#f8f8f8" /><ellipse cx="213.90" cy="396.10" rx="3.40" ry="3.40" fill="#f8f8f8" /><ellipse cx="228.60" cy="395.10" rx="3.60" ry="3.60" fill="#f8f8f8" /><ellipse cx="220.90" cy="376.90" rx="2.20" ry="2.20" fill="#f8f8f8" /><ellipse cx="240.80" cy="381.20" rx="2.80" ry="6.20" fill="#f8f8f6" /><path d="M240.8 387V405" stroke="#b89858" stroke-width="0.5" fill="none" /><ellipse cx="239.80" cy="392.60" rx="2.20" ry="2.20" fill="#7a6238" /><path d="M258.2 375.7L263.3 383.9L257.1 392.6M261.6 375.7L266.3 385.9M272.4 375.7L268.4 389L274.5 397.1L271.8 403.2" stroke="#b89858" stroke-width="0.5" fill="none" /><path d="M265.7 385.9 H266.9 L270 392.6 Q266.3 393.8 262.5 392.6 Z" fill="#d9d9db" /><path d="M256.5 392.6 H257.7 L260.8 402.8 Q256.4 404.2 252 402.8 Z" fill="#545458" /><path d="M271.2 403.2 H272.4 L275.5 413 Q271.5 414.4 267.5 413 Z" fill="#8b8b90" /><path d="M228.6 403.6V415.5" stroke="#c8c8c8" stroke-width="0.9" fill="none" /><path d="M211 417.6H244" stroke="#3a3a3a" stroke-width="0.5" fill="none" /><ellipse cx="213.30" cy="415.50" rx="2.60" ry="2.60" fill="#fafafa" /><rect x="212.30" y="412.00" width="2.00" height="1.40" fill="#222" /><ellipse cx="222.10" cy="415.50" rx="2.60" ry="2.60" fill="#fafafa" /><rect x="221.10" y="412.00" width="2.00" height="1.40" fill="#222" /><ellipse cx="232.70" cy="415.50" rx="2.60" ry="2.60" fill="#fafafa" /><rect x="231.70" y="412.00" width="2.00" height="1.40" fill="#222" /><ellipse cx="241.30" cy="415.50" rx="2.60" ry="2.60" fill="#fafafa" /><rect x="240.30" y="412.00" width="2.00" height="1.40" fill="#222" /><ellipse cx="211.30" cy="421.00" rx="2.40" ry="2.40" fill="#f6f6f6" /><rect x="210.40" y="417.80" width="1.80" height="1.20" fill="#222" /><ellipse cx="218.50" cy="421.00" rx="2.40" ry="2.40" fill="#f6f6f6" /><rect x="217.60" y="417.80" width="1.80" height="1.20" fill="#222" /><ellipse cx="226.00" cy="421.00" rx="2.40" ry="2.40" fill="#f6f6f6" /><rect x="225.10" y="417.80" width="1.80" height="1.20" fill="#222" /><ellipse cx="236.00" cy="421.00" rx="2.40" ry="2.40" fill="#f6f6f6" /><rect x="235.10" y="417.80" width="1.80" height="1.20" fill="#222" /><ellipse cx="243.00" cy="421.00" rx="2.40" ry="2.40" fill="#f6f6f6" /><rect x="242.10" y="417.80" width="1.80" height="1.20" fill="#222" /><rect x="248.00" y="416.50" width="28.00" height="12.20" fill="#0a0a0a" /><text x="262" y="425.2" text-anchor="middle" font-family="'Liberation Sans','Noto Sans CJK SC',sans-serif" font-weight="700" font-size="6.4" fill="#f4f4f4">灯具组合</text></g><rect x="199.00" y="416.50" width="8.90" height="8.90" fill="#f1f1f1" /><path d="M200.8 417.3999999999999 H204.0 Q205.4 418.09999999999997 205.6 419.49999999999994 L204.4 420.8999999999999 L205.6 422.29999999999995 Q205.4 423.69999999999993 204.0 424.3999999999999 H200.8 V422.99999999999994 L202.3 422.3999999999999 L200.8 421.79999999999995 V419.99999999999994 L202.3 419.3999999999999 L200.8 418.79999999999995 Z" fill="#1b96d6" /><path d="M203.9 418.19999999999993 Q206.5 418.8999999999999 206.4 420.8999999999999 Q206.5 422.8999999999999 203.9 423.59999999999997 Q204.9 420.8999999999999 203.9 418.19999999999993 Z" fill="#2b4a7c" /></g><rect x="295.00" y="339.40" width="91.30" height="97.10" fill="#8d8d8d" /><rect x="295.70" y="340.20" width="89.80" height="96.30" fill="#808080" /><rect x="295.00" y="426.20" width="91.30" height="10.30" fill="#93918f" /><g id="im32"><g transform="translate(0.00 0.00)"><defs><radialGradient id="g32a" cx="0.55" cy="1.0" r="1.1"><stop offset="0" stop-color="#b4b4b4"/><stop offset="0.5" stop-color="#8a8a8a"/><stop offset="1" stop-color="#2e2e2e"/></radialGradient><radialGradient id="g32b" cx="0.5" cy="0.55" r="0.75"><stop offset="0" stop-color="#d6d6d6"/><stop offset="0.6" stop-color="#b8b8b8"/><stop offset="1" stop-color="#7c7c7c"/></radialGradient><radialGradient id="g32c" cx="0.5" cy="0.9" r="1.0"><stop offset="0" stop-color="#b8b8b8"/><stop offset="0.6" stop-color="#8c8c8c"/><stop offset="1" stop-color="#5c5c5c"/></radialGradient><radialGradient id="g32d" cx="0.5" cy="0.7" r="0.9"><stop offset="0" stop-color="#c6c6c6"/><stop offset="0.6" stop-color="#a4a4a4"/><stop offset="1" stop-color="#707070"/></radialGradient></defs><rect x="296.00" y="344.50" width="43.30" height="38.80" fill="url(#g32a)" /><rect x="339.30" y="344.50" width="46.40" height="38.80" fill="url(#g32b)" /><rect x="296.00" y="383.30" width="43.30" height="37.70" fill="url(#g32c)" /><rect x="339.30" y="383.30" width="46.40" height="37.70" fill="url(#g32d)" /><path d="M339.3 344.5V421M296 383.3H385.7" stroke="#b0b0b0" stroke-width="0.5" fill="none" /><path d="M316 347.8Q315 353 316.4 358Q317 363 316 368.6" stroke="#c9a352" stroke-width="0.7" fill="none" /><path d="M316 366Q309 368 301.1 374.3M316 366Q324 368 331.7 373M316 367Q312 370 308 373.6M316 367Q320 370 325 373.4" stroke="#c9a352" stroke-width="0.6" fill="none" /><path d="M300 374.6Q302 371.6 304 374Q306 376.4 308 373.4Q310 371 312 374Q314 376 316 372.6Q318 370.6 320 373.6Q322 375.8 324 373Q326 371 328 373.4Q330 375 332.4 372.6" stroke="#c9a352" stroke-width="1.1" fill="none" /><path d="M362.3 351.2V358" stroke="#c9a352" stroke-width="0.7" fill="none" /><rect x="361.60" y="350.60" width="1.40" height="1.20" fill="#c9a352" /><g filter="url(#b3)"><ellipse cx="363.00" cy="366.00" rx="15.60" ry="8.60" fill="#6e6e6c" opacity="0.55"/><ellipse cx="349.40" cy="360.40" rx="1.70" ry="2.60" fill="#d9d9d9" /><ellipse cx="349.40" cy="369.40" rx="1.90" ry="3.00" fill="#6a6a64" /><ellipse cx="352.80" cy="360.65" rx="1.70" ry="2.60" fill="#55554f" /><ellipse cx="352.80" cy="370.24" rx="1.90" ry="3.00" fill="#e6e6e6" /><ellipse cx="356.20" cy="360.87" rx="1.70" ry="2.60" fill="#d9d9d9" /><ellipse cx="356.20" cy="370.96" rx="1.90" ry="3.00" fill="#6a6a64" /><ellipse cx="359.60" cy="361.01" rx="1.70" ry="2.60" fill="#55554f" /><ellipse cx="359.60" cy="371.43" rx="1.90" ry="3.00" fill="#e6e6e6" /><ellipse cx="363.00" cy="361.06" rx="1.70" ry="2.60" fill="#d9d9d9" /><ellipse cx="363.00" cy="371.60" rx="1.90" ry="3.00" fill="#6a6a64" /><ellipse cx="366.40" cy="361.01" rx="1.70" ry="2.60" fill="#55554f" /><ellipse cx="366.40" cy="371.43" rx="1.90" ry="3.00" fill="#e6e6e6" /><ellipse cx="369.80" cy="360.87" rx="1.70" ry="2.60" fill="#d9d9d9" /><ellipse cx="369.80" cy="370.96" rx="1.90" ry="3.00" fill="#6a6a64" /><ellipse cx="373.20" cy="360.65" rx="1.70" ry="2.60" fill="#55554f" /><ellipse cx="373.20" cy="370.24" rx="1.90" ry="3.00" fill="#e6e6e6" /><ellipse cx="376.60" cy="360.40" rx="1.70" ry="2.60" fill="#d9d9d9" /><ellipse cx="376.60" cy="369.40" rx="1.90" ry="3.00" fill="#6a6a64" /><circle cx="357" cy="368.6" r="2.2" fill="none" stroke="#f2f2f2" stroke-width="0.6"/><circle cx="362.6" cy="368.6" r="2.2" fill="none" stroke="#f2f2f2" stroke-width="0.6"/><circle cx="368" cy="368.6" r="2.2" fill="none" stroke="#f2f2f2" stroke-width="0.6"/><path d="M347.6 364.4Q363 369 378.4 364.4" stroke="#c9a352" stroke-width="0.7" fill="none" /></g><ellipse cx="317.40" cy="386.90" rx="1.80" ry="0.70" fill="#2a2a2a" /><path d="M317.4 387V396" stroke="#5a4a2a" stroke-width="0.5" fill="none" /><path d="M317.4 396L307.9 403V415M317.4 396L328.2 403V415M317.4 396L313 404V415.6M317.4 396L322.6 404V415.6M317.4 396V409M307.9 415H313M322.6 415H328.2M307.9 403Q313 400 313 404M328.2 403Q322.6 400 322.6 404M309.6 405V414M311.4 405V414M324.4 405V414M326.4 405V414M313 407L322.6 412M322.6 407L313 412" stroke="#c9a352" stroke-width="0.5" fill="none" /><ellipse cx="317.60" cy="409.40" rx="0.90" ry="1.30" fill="#2a2a2a" /><path d="M364.3 388Q365.4 393 362.6 397Q359.6 400.6 360.6 404" stroke="#7a6238" stroke-width="0.6" fill="none" /><ellipse cx="362.3" cy="408.3" rx="17" ry="3.8" fill="none" stroke="#5e4e30" stroke-width="1.1"/><ellipse cx="348.60" cy="405.80" rx="1.50" ry="1.40" fill="#f4f4f0" /><ellipse cx="353.40" cy="404.60" rx="1.50" ry="1.40" fill="#f4f4f0" /><ellipse cx="358.60" cy="404.00" rx="1.50" ry="1.40" fill="#f4f4f0" /><ellipse cx="364.20" cy="403.80" rx="1.50" ry="1.40" fill="#f4f4f0" /><ellipse cx="369.60" cy="404.20" rx="1.50" ry="1.40" fill="#f4f4f0" /><ellipse cx="374.60" cy="405.20" rx="1.50" ry="1.40" fill="#f4f4f0" /><ellipse cx="378.00" cy="406.80" rx="1.50" ry="1.40" fill="#f4f4f0" /></g><rect x="296.70" y="416.50" width="8.90" height="8.90" fill="#f1f1f1" /><path d="M298.5 417.3999999999999 H301.7 Q303.09999999999997 418.09999999999997 303.3 419.49999999999994 L302.09999999999997 420.8999999999999 L303.3 422.29999999999995 Q303.09999999999997 423.69999999999993 301.7 424.3999999999999 H298.5 V422.99999999999994 L300.0 422.3999999999999 L298.5 421.79999999999995 V419.99999999999994 L300.0 419.3999999999999 L298.5 418.79999999999995 Z" fill="#1b96d6" /><path d="M301.59999999999997 418.19999999999993 Q304.2 418.8999999999999 304.09999999999997 420.8999999999999 Q304.2 422.8999999999999 301.59999999999997 423.59999999999997 Q302.59999999999997 420.8999999999999 301.59999999999997 418.19999999999993 Z" fill="#2b4a7c" /></g><rect x="392.90" y="339.40" width="91.30" height="97.10" fill="#8d8d8d" /><rect x="393.60" y="340.20" width="89.80" height="96.30" fill="#808080" /><rect x="392.90" y="426.20" width="91.30" height="10.30" fill="#93918f" /><g id="im33"><g transform="translate(0.00 0.00)"><rect x="394.00" y="341.00" width="89.80" height="85.70" fill="#ebebeb" /><clipPath id="k8"><rect x="394" y="341" width="89.8" height="85.7"/></clipPath><g clip-path="url(#k8)"><g filter="url(#b20)"><ellipse cx="416.00" cy="362.00" rx="18.00" ry="16.00" fill="#f8f8f8" /><ellipse cx="462.00" cy="362.00" rx="18.00" ry="16.00" fill="#f6f6f6" /><ellipse cx="416.00" cy="405.00" rx="18.00" ry="12.00" fill="#f6f6f6" /><ellipse cx="462.00" cy="402.00" rx="14.00" ry="14.00" fill="#f8f8f8" /></g></g><path d="M439.3 341V426.7M394 384.5H483.8" stroke="#e0e0e0" stroke-width="0.5" fill="none" /><path d="M416.5 359.6L439.1 361.9M416.5 359.6L432.4 363.1M416.5 359.6L434.2 369.8M416.5 359.6L429.0 371.0M416.5 359.6L426.7 374.9M416.5 359.6L421.4 373.8M416.5 359.6L417.8 375.9M416.5 359.6L411.7 379.4M416.5 359.6L407.4 375.0M416.5 359.6L405.7 371.9M416.5 359.6L404.5 368.8M416.5 359.6L400.0 366.2M416.5 359.6L394.6 363.4M416.5 359.6L396.7 358.5M416.5 359.6L401.2 355.9M416.5 359.6L402.0 352.3M416.5 359.6L400.2 345.3M416.5 359.6L408.0 346.6M416.5 359.6L412.3 343.7M416.5 359.6L415.9 342.5M416.5 359.6L420.0 343.5M416.5 359.6L423.4 343.5M416.5 359.6L427.7 348.4M416.5 359.6L433.4 348.7M416.5 359.6L434.4 352.5M416.5 359.6L438.7 356.0" stroke="#bfa060" stroke-width="0.45" fill="none" /><path d="M435.7 361.5L439.1 361.9" stroke="#f6f2e6" stroke-width="0.9" fill="none" /><path d="M429.1 362.3L432.4 363.1" stroke="#f6f2e6" stroke-width="0.9" fill="none" /><path d="M431.3 367.9L434.2 369.8" stroke="#f6f2e6" stroke-width="0.9" fill="none" /><path d="M426.6 368.5L429.0 371.0" stroke="#f6f2e6" stroke-width="0.9" fill="none" /><path d="M425.0 371.9L426.7 374.9" stroke="#f6f2e6" stroke-width="0.9" fill="none" /><path d="M420.4 370.5L421.4 373.8" stroke="#f6f2e6" stroke-width="0.9" fill="none" /><path d="M417.6 372.5L417.8 375.9" stroke="#f6f2e6" stroke-width="0.9" fill="none" /><path d="M412.4 376.0L411.7 379.4" stroke="#f6f2e6" stroke-width="0.9" fill="none" /><path d="M409.0 372.0L407.4 375.0" stroke="#f6f2e6" stroke-width="0.9" fill="none" /><path d="M407.7 369.2L405.7 371.9" stroke="#f6f2e6" stroke-width="0.9" fill="none" /><path d="M407.1 366.6L404.5 368.8" stroke="#f6f2e6" stroke-width="0.9" fill="none" /><path d="M403.1 364.8L400.0 366.2" stroke="#f6f2e6" stroke-width="0.9" fill="none" /><path d="M398.0 362.7L394.6 363.4" stroke="#f6f2e6" stroke-width="0.9" fill="none" /><path d="M400.1 358.7L396.7 358.5" stroke="#f6f2e6" stroke-width="0.9" fill="none" /><path d="M404.4 356.8L401.2 355.9" stroke="#f6f2e6" stroke-width="0.9" fill="none" /><path d="M404.9 354.0L402.0 352.3" stroke="#f6f2e6" stroke-width="0.9" fill="none" /><path d="M402.6 347.7L400.2 345.3" stroke="#f6f2e6" stroke-width="0.9" fill="none" /><path d="M409.7 349.6L408.0 346.6" stroke="#f6f2e6" stroke-width="0.9" fill="none" /><path d="M413.2 347.0L412.3 343.7" stroke="#f6f2e6" stroke-width="0.9" fill="none" /><path d="M416.1 345.9L415.9 342.5" stroke="#f6f2e6" stroke-width="0.9" fill="none" /><path d="M419.2 346.9L420.0 343.5" stroke="#f6f2e6" stroke-width="0.9" fill="none" /><path d="M422.1 346.6L423.4 343.5" stroke="#f6f2e6" stroke-width="0.9" fill="none" /><path d="M425.4 351.0L427.7 348.4" stroke="#f6f2e6" stroke-width="0.9" fill="none" /><path d="M430.7 350.7L433.4 348.7" stroke="#f6f2e6" stroke-width="0.9" fill="none" /><path d="M431.3 353.9L434.4 352.5" stroke="#f6f2e6" stroke-width="0.9" fill="none" /><path d="M435.3 356.6L438.7 356.0" stroke="#f6f2e6" stroke-width="0.9" fill="none" /><path d="M416.5 341V359.6" stroke="#4a4030" stroke-width="0.6" fill="none" /><ellipse cx="416.50" cy="359.60" rx="1.30" ry="1.60" fill="#8a6c34" /><path d="M460.3 341V376.7" stroke="#9a9aa0" stroke-width="0.7" fill="none" /><ellipse cx="460.30" cy="377.60" rx="1.00" ry="1.60" fill="#9a9aa0" /><path d="M460.3 372Q452 378 446 372V369.6M460.3 372Q457 376 455.2 372V368M460.3 372Q464 376 466.4 372V370M460.3 372Q470 378 476 372V369M460.3 361Q454 365 448.7 360V357M460.3 361Q457 364 454.8 360V354.4M460.3 361Q462 364 463.3 362V359.4M460.3 361Q466 365 469 360V355" stroke="#9a9aa0" stroke-width="0.5" fill="none" /><path d="M446.91 350.90 H450.49 L451.50 356.90 H445.90 Z" fill="#b9b9c1" /><path d="M453.01 348.20 H456.59 L457.60 354.20 H452.00 Z" fill="#b9b9c1" /><path d="M461.51 353.30 H465.09 L466.10 359.30 H460.50 Z" fill="#b9b9c1" /><path d="M467.21 348.90 H470.79 L471.80 354.90 H466.20 Z" fill="#b9b9c1" /><path d="M443.82 362.30 H448.18 L449.40 369.90 H442.60 Z" fill="#b9b9c1" /><path d="M453.02 360.70 H457.38 L458.60 368.30 H451.80 Z" fill="#b9b9c1" /><path d="M464.22 362.70 H468.58 L469.80 370.30 H463.00 Z" fill="#b9b9c1" /><path d="M473.82 361.70 H478.18 L479.40 369.30 H472.60 Z" fill="#b9b9c1" /><path d="M416.5 384.5V401.4" stroke="#c2c2c2" stroke-width="1.5" fill="none" /><path d="M416.5 405.4L398.1 408.3M416.5 405.4L402.6 404.2M416.5 405.4L407.3 402.8M416.5 405.4L425.6 403.6M416.5 405.4L431.1 408.3M416.5 405.4L437.3 415M416.5 405.4L422.6 417.9M416.5 405.4L412.4 409.3M416.5 405.4L398.1 413M416.5 405.4L405 411M416.5 405.4L428 412" stroke="#1c1c1c" stroke-width="0.55" fill="none" /><ellipse cx="416.50" cy="404.60" rx="1.60" ry="2.60" fill="#2a2a2a" /><ellipse cx="398.10" cy="408.30" rx="1.50" ry="1.50" fill="#151515" /><ellipse cx="398.50" cy="408.80" rx="0.60" ry="0.60" fill="#d8a860" /><ellipse cx="402.60" cy="404.20" rx="1.50" ry="1.50" fill="#151515" /><ellipse cx="403.00" cy="404.70" rx="0.60" ry="0.60" fill="#d8a860" /><ellipse cx="407.30" cy="402.80" rx="1.50" ry="1.50" fill="#151515" /><ellipse cx="407.70" cy="403.30" rx="0.60" ry="0.60" fill="#d8a860" /><ellipse cx="425.60" cy="403.60" rx="1.50" ry="1.50" fill="#151515" /><ellipse cx="426.00" cy="404.10" rx="0.60" ry="0.60" fill="#d8a860" /><ellipse cx="431.10" cy="408.30" rx="1.50" ry="1.50" fill="#151515" /><ellipse cx="431.50" cy="408.80" rx="0.60" ry="0.60" fill="#d8a860" /><ellipse cx="437.30" cy="415.00" rx="1.50" ry="1.50" fill="#151515" /><ellipse cx="437.70" cy="415.50" rx="0.60" ry="0.60" fill="#d8a860" /><ellipse cx="422.60" cy="417.90" rx="1.50" ry="1.50" fill="#151515" /><ellipse cx="423.00" cy="418.40" rx="0.60" ry="0.60" fill="#d8a860" /><ellipse cx="412.40" cy="409.30" rx="1.50" ry="1.50" fill="#151515" /><ellipse cx="412.80" cy="409.80" rx="0.60" ry="0.60" fill="#d8a860" /><ellipse cx="398.10" cy="413.00" rx="1.50" ry="1.50" fill="#151515" /><ellipse cx="398.50" cy="413.50" rx="0.60" ry="0.60" fill="#d8a860" /><ellipse cx="405.00" cy="411.00" rx="1.50" ry="1.50" fill="#151515" /><ellipse cx="405.40" cy="411.50" rx="0.60" ry="0.60" fill="#d8a860" /><ellipse cx="428.00" cy="412.00" rx="1.50" ry="1.50" fill="#151515" /><ellipse cx="428.40" cy="412.50" rx="0.60" ry="0.60" fill="#d8a860" /><rect x="458.40" y="386.40" width="5.00" height="1.60" fill="#8a8a8a" /><path d="M460.9 388L444.8 417M460.9 388L449.4 417M460.9 388L454 417M460.9 388L458.6 417M460.9 388L463.2 417M460.9 388L467.8 417M460.9 388L472.4 417M460.9 388L477 417" stroke="#8a8a8a" stroke-width="0.35" fill="none" /><ellipse cx="461.00" cy="423.40" rx="18.00" ry="2.40" fill="#cfcfcf" filter="url(#b3)"/><ellipse cx="444.80" cy="418.20" rx="2.40" ry="2.40" fill="#2e2e2e" /><ellipse cx="444.20" cy="417.40" rx="0.90" ry="0.90" fill="#c8c8c8" /><ellipse cx="449.40" cy="418.20" rx="2.40" ry="2.40" fill="#2e2e2e" /><ellipse cx="448.80" cy="417.40" rx="0.90" ry="0.90" fill="#c8c8c8" /><ellipse cx="454.00" cy="418.20" rx="2.40" ry="2.40" fill="#2e2e2e" /><ellipse cx="453.40" cy="417.40" rx="0.90" ry="0.90" fill="#c8c8c8" /><ellipse cx="458.60" cy="418.20" rx="2.40" ry="2.40" fill="#2e2e2e" /><ellipse cx="458.00" cy="417.40" rx="0.90" ry="0.90" fill="#c8c8c8" /><ellipse cx="463.20" cy="418.20" rx="2.40" ry="2.40" fill="#2e2e2e" /><ellipse cx="462.60" cy="417.40" rx="0.90" ry="0.90" fill="#c8c8c8" /><ellipse cx="467.80" cy="418.20" rx="2.40" ry="2.40" fill="#2e2e2e" /><ellipse cx="467.20" cy="417.40" rx="0.90" ry="0.90" fill="#c8c8c8" /><ellipse cx="472.40" cy="418.20" rx="2.40" ry="2.40" fill="#2e2e2e" /><ellipse cx="471.80" cy="417.40" rx="0.90" ry="0.90" fill="#c8c8c8" /><ellipse cx="477.00" cy="418.20" rx="2.40" ry="2.40" fill="#2e2e2e" /><ellipse cx="476.40" cy="417.40" rx="0.90" ry="0.90" fill="#c8c8c8" /><ellipse cx="447.00" cy="420.80" rx="2.30" ry="2.30" fill="#3a3a3a" /><ellipse cx="446.40" cy="420.20" rx="0.80" ry="0.80" fill="#d4d4d4" /><ellipse cx="451.60" cy="420.80" rx="2.30" ry="2.30" fill="#3a3a3a" /><ellipse cx="451.00" cy="420.20" rx="0.80" ry="0.80" fill="#d4d4d4" /><ellipse cx="456.20" cy="420.80" rx="2.30" ry="2.30" fill="#3a3a3a" /><ellipse cx="455.60" cy="420.20" rx="0.80" ry="0.80" fill="#d4d4d4" /><ellipse cx="465.40" cy="420.80" rx="2.30" ry="2.30" fill="#3a3a3a" /><ellipse cx="464.80" cy="420.20" rx="0.80" ry="0.80" fill="#d4d4d4" /><ellipse cx="470.00" cy="420.80" rx="2.30" ry="2.30" fill="#3a3a3a" /><ellipse cx="469.40" cy="420.20" rx="0.80" ry="0.80" fill="#d4d4d4" /><ellipse cx="474.80" cy="420.80" rx="2.30" ry="2.30" fill="#3a3a3a" /><ellipse cx="474.20" cy="420.20" rx="0.80" ry="0.80" fill="#d4d4d4" /></g><rect x="394.60" y="416.50" width="8.90" height="8.90" fill="#f1f1f1" /><path d="M396.40000000000003 417.3999999999999 H399.6 Q401.0 418.09999999999997 401.20000000000005 419.49999999999994 L400.0 420.8999999999999 L401.20000000000005 422.29999999999995 Q401.0 423.69999999999993 399.6 424.3999999999999 H396.40000000000003 V422.99999999999994 L397.90000000000003 422.3999999999999 L396.40000000000003 421.79999999999995 V419.99999999999994 L397.90000000000003 419.3999999999999 L396.40000000000003 418.79999999999995 Z" fill="#1b96d6" /><path d="M399.5 418.19999999999993 Q402.1 418.8999999999999 402.0 420.8999999999999 Q402.1 422.8999999999999 399.5 423.59999999999997 Q400.5 420.8999999999999 399.5 418.19999999999993 Z" fill="#2b4a7c" /></g></g></svg><div class="lab" style="left:100.3px;top:112.7px;width:90.4px">0A-TZ<b>素材网</b>.max</div><div class="lab" style="left:198.0px;top:112.7px;width:90.4px">01.max</div><div class="lab" style="left:295.7px;top:112.7px;width:90.4px">02.max</div><div class="lab" style="left:393.6px;top:112.7px;width:90.4px">03.max</div><div class="lab" style="left:100.3px;top:217.4px;width:90.4px">04.max</div><div class="lab" style="left:198.0px;top:217.4px;width:90.4px">05.max</div><div class="lab" style="left:295.7px;top:217.4px;width:90.4px">07.max</div><div class="lab" style="left:393.6px;top:217.4px;width:90.4px">08.max</div><div class="lab" style="left:100.3px;top:321.6px;width:90.4px">09.max</div><div class="lab" style="left:198.0px;top:321.6px;width:90.4px">10.max</div><div class="lab" style="left:295.7px;top:321.6px;width:90.4px">11.max</div><div class="lab" style="left:393.6px;top:321.6px;width:90.4px">12.max</div><div class="a" style="left:505.3px;top:20.9px;width:9.3px;height:407.6px;background:#6c6c6c;"></div><div class="a" style="left:507.7px;top:31px;width:4.4px;height:9.2px;background:#a4a4ac;"></div><svg class="a" style="left:505px;top:20px" width="10" height="410" viewBox="0 0 10 410"><path d="M3 6.5 L5 3.8 L7 6.5 Z" fill="#b5b5b5"/><path d="M3 402.5 L5 405.2 L7 402.5 Z" fill="#b5b5b5"/></svg><div class="a" style="left:94px;top:428.6px;width:420.6px;height:22.4px;background:#454545;"></div><div class="a" style="left:94px;top:436.5px;width:420.6px;height:1px;background:#303030;"></div><div class="a" style="left:94px;top:445.3px;width:420.6px;height:1px;background:#303030;"></div><div class="a" style="left:94px;width:420px;top:428.2px;text-align:center;font-size:6.8px;line-height:9px;color:#e0e0e0;will-change:transform;font-family:'Liberation Sans','Noto Sans CJK SC',sans-serif">信息</div><div class="a" style="left:94px;width:420px;top:436.8px;text-align:center;font-size:6.8px;line-height:9px;color:#e0e0e0;will-change:transform;font-family:'Liberation Sans','Noto Sans CJK SC',sans-serif">放置选项</div><div class="a" style="left:94px;width:420px;top:445.6px;text-align:center;font-size:6.8px;line-height:9px;color:#e0e0e0;will-change:transform;font-family:'Liberation Sans','Noto Sans CJK SC',sans-serif">设置</div><svg class="a" style="left:505px;top:428px" width="10" height="23" viewBox="0 0 10 23"><path d="M3 5.6 L5 3.2 L7 5.6 Z M3 14.2 L5 11.8 L7 14.2 Z M3 22.8 L5 20.4 L7 22.8 Z" fill="#b8b8b8"/></svg><div class="a" style="left:520.7px;top:0;width:429.29999999999995px;height:451px;background:#3d3d3d"></div><svg class="a" style="left:0;top:0;will-change:transform" width="950" height="451" viewBox="0 0 950 451"><defs><linearGradient id="vg" x1="0" y1="0" x2="0" y2="1"><stop offset="0" stop-color="#1b1b1b"/><stop offset="0.35" stop-color="#272727"/><stop offset="1" stop-color="#4e4e4e"/></linearGradient><linearGradient id="gl" gradientUnits="userSpaceOnUse" x1="0" y1="7" x2="0" y2="432"><stop offset="0" stop-color="#7c7c7c"/><stop offset="0.5" stop-color="#787878"/><stop offset="1" stop-color="#747474"/></linearGradient></defs><rect x="520.7" y="0" width="429.29999999999995" height="4.2" fill="#3e3e3e"/><rect x="520.7" y="4.2" width="429.29999999999995" height="1" fill="#262626"/><rect x="520.7" y="5.2" width="429.29999999999995" height="2" fill="#3a3a3a"/><path d="M521.30 0V4M533.34 0V4M545.38 0V4M557.42 0V4M569.46 0V4M581.50 0V4M593.54 0V4M605.58 0V4M617.62 0V4M629.66 0V4M641.70 0V4M653.74 0V4M665.78 0V4M677.82 0V4M689.86 0V4M701.90 0V4M713.94 0V4M725.98 0V4M738.02 0V4M750.06 0V4M762.10 0V4M774.14 0V4M786.18 0V4M798.22 0V4M810.26 0V4M822.30 0V4M834.34 0V4M846.38 0V4M858.42 0V4M870.46 0V4M882.50 0V4M894.54 0V4M906.58 0V4M918.62 0V4M930.66 0V4M942.70 0V4" stroke="#7c7c7c" stroke-width="0.6"/><path d="M713.6 0V4.2" stroke="#111" stroke-width="0.7"/><rect x="916" y="0" width="16.5" height="2" fill="#9c9c9c"/><path d="M905.5 1.5 L908 0.3 L908 1.2 L911 1.2 L911 1.8 L908 1.8 L908 2.7 Z" fill="#ddd"/><path d="M944 1.5 L941.5 0.3 L941.5 1.2 L938.5 1.2 L938.5 1.8 L941.5 1.8 L941.5 2.7 Z" fill="#ddd"/><rect x="520.7" y="7.2" width="429.29999999999995" height="424.40000000000003" fill="url(#vg)"/><path d="M529.5 7.8V431.2M556.5 7.8V431.2M583.5 7.8V431.2M610.5 7.8V431.2M630.5 7.8V431.2M657.5 7.8V431.2M684.5 7.8V431.2M711.5 7.8V431.2M738.5 7.8V431.2M785.5 7.8V431.2M812.5 7.8V431.2M839.5 7.8V431.2M859.5 7.8V431.2M886.5 7.8V431.2M913.5 7.8V431.2M940.5 7.8V431.2M520.7 16.5H950M520.7 36.5H950M520.7 63.5H950M520.7 90.5H950M520.7 117.5H950M520.7 144.5H950M520.7 164.5H950M520.7 191.5H950M520.7 218.5H950M520.7 245.5H950M520.7 265.5H950M520.7 292.5H950M520.7 346.5H950M520.7 366.5H950M520.7 393.5H950M520.7 420.5H950" stroke="url(#gl)" stroke-width="1" fill="none" opacity="0.8"/><path d="M536.5 7.8V431.2M549.5 7.8V431.2M563.5 7.8V431.2M576.5 7.8V431.2M590.5 7.8V431.2M603.5 7.8V431.2M637.5 7.8V431.2M664.5 7.8V431.2M677.5 7.8V431.2M691.5 7.8V431.2M704.5 7.8V431.2M731.5 7.8V431.2M765.5 7.8V431.2M778.5 7.8V431.2M792.5 7.8V431.2M805.5 7.8V431.2M832.5 7.8V431.2M866.5 7.8V431.2M893.5 7.8V431.2M906.5 7.8V431.2M920.5 7.8V431.2M933.5 7.8V431.2M520.7 9.5H950M520.7 43.5H950M520.7 70.5H950M520.7 83.5H950M520.7 97.5H950M520.7 110.5H950M520.7 137.5H950M520.7 171.5H950M520.7 184.5H950M520.7 198.5H950M520.7 211.5H950M520.7 238.5H950M520.7 272.5H950M520.7 299.5H950M520.7 312.5H950M520.7 326.5H950M520.7 339.5H950M520.7 373.5H950M520.7 400.5H950M520.7 413.5H950M520.7 427.5H950" stroke="url(#gl)" stroke-width="1" fill="none" opacity="0.38"/><path d="M522.5 7.8V431.2M542.5 7.8V431.2M569.5 7.8V431.2M596.5 7.8V431.2M617.5 7.8V431.2M623.5 7.8V431.2M644.5 7.8V431.2M650.5 7.8V431.2M670.5 7.8V431.2M697.5 7.8V431.2M718.5 7.8V431.2M724.5 7.8V431.2M745.5 7.8V431.2M751.5 7.8V431.2M771.5 7.8V431.2M798.5 7.8V431.2M819.5 7.8V431.2M825.5 7.8V431.2M846.5 7.8V431.2M852.5 7.8V431.2M872.5 7.8V431.2M879.5 7.8V431.2M899.5 7.8V431.2M926.5 7.8V431.2M947.5 7.8V431.2M520.7 23.5H950M520.7 29.5H950M520.7 49.5H950M520.7 56.5H950M520.7 76.5H950M520.7 103.5H950M520.7 124.5H950M520.7 130.5H950M520.7 151.5H950M520.7 157.5H950M520.7 177.5H950M520.7 204.5H950M520.7 225.5H950M520.7 231.5H950M520.7 252.5H950M520.7 258.5H950M520.7 278.5H950M520.7 285.5H950M520.7 305.5H950M520.7 332.5H950M520.7 353.5H950M520.7 359.5H950M520.7 380.5H950M520.7 386.5H950M520.7 406.5H950" stroke="url(#gl)" stroke-width="1" fill="none" opacity="0.2"/><path d="M758.5 7.6V431.4" stroke="#000" stroke-width="0.9"/><path d="M520.7 319.4H950" stroke="#000" stroke-width="0.7" opacity="0.85"/><path d="M520.7 7.3H950M520.7 431.6H950" stroke="#b08a2a" stroke-width="0.9"/><g font-family="'Liberation Serif','Noto Serif CJK SC',serif" font-size="67" font-weight="300" fill="none" stroke="#d0a832" stroke-width="0.6"><text x="531.2" y="253" font-size="69.5" textLength="32" lengthAdjust="spacingAndGlyphs">T</text><text x="566.0" y="253" font-size="69.5" textLength="31" lengthAdjust="spacingAndGlyphs">Z</text><text x="600.5" y="255">素</text><text x="668" y="255">材</text><text x="733.5" y="255">网</text><text x="801" y="255">演</text><text x="868" y="255">示</text></g><rect x="916" y="30" width="17" height="17.4" fill="#a4a4a4" opacity="0.85"/><rect x="916.2" y="30.2" width="16.6" height="17" fill="none" stroke="#bcbcbc" stroke-width="0.5" opacity="0.8"/><text x="920.6" y="42.3" font-family="'Liberation Sans','Noto Sans CJK SC',sans-serif" font-size="8" fill="#777" opacity="0.9">前</text><path d="M904 48.2 C910 49.9 939 49.9 945 48.2" stroke="#cfcfcf" stroke-width="0.6" fill="none" opacity="0.45"/><path d="M904 48.1 C906 48.8 909 49.2 913 49.4M945 48.1 C943 48.8 940 49.2 936 49.4" stroke="#e6e6e6" stroke-width="0.8" fill="none" opacity="0.9"/><rect x="520.7" y="432.1" width="429.29999999999995" height="9.7" fill="#404040"/><rect x="520.7" y="441.8" width="429.29999999999995" height="9.2" fill="#242424"/><path d="M524.90 443.3V450.3M533.99 443.3V450.3M543.07 443.3V450.3M552.16 443.3V450.3M561.25 443.3V450.3M570.33 443.3V450.3M615.77 443.3V450.3M624.86 443.3V450.3M633.94 443.3V450.3M643.03 443.3V450.3M652.12 443.3V450.3M661.20 443.3V450.3M670.29 443.3V450.3M679.38 443.3V450.3M688.47 443.3V450.3M724.81 443.3V450.3M733.90 443.3V450.3M742.99 443.3V450.3M752.07 443.3V450.3M761.16 443.3V450.3M770.25 443.3V450.3M779.34 443.3V450.3M788.42 443.3V450.3M797.51 443.3V450.3M806.60 443.3V450.3M815.68 443.3V450.3M833.86 443.3V450.3M842.94 443.3V450.3M852.03 443.3V450.3M861.12 443.3V450.3M870.21 443.3V450.3M879.29 443.3V450.3M888.38 443.3V450.3M897.47 443.3V450.3M906.55 443.3V450.3M915.64 443.3V450.3M924.73 443.3V450.3" stroke="#8c8c8c" stroke-width="0.6"/><path d="M579.42 443.3V450.3M588.51 443.3V450.3M597.60 443.3V450.3M606.68 443.3V450.3M697.55 443.3V450.3M706.64 443.3V450.3M715.73 443.3V450.3M824.77 443.3V450.3" stroke="#555" stroke-width="0.6"/><rect x="928" y="443" width="22" height="8" fill="#484848"/><path d="M889.2 435 L889.2 444.6 L891.4 442.6 L893 446 L894.4 445.4 L892.8 442 L895.8 441.8 Z" fill="#fff" stroke="#111" stroke-width="0.6"/></svg><svg class="a" style="left:94px;top:5px" width="421" height="16" viewBox="94 5 421 16"><g fill="#cfcfcf"><rect x="98" y="7" width="4.6" height="4.8"/><rect x="105.2" y="13" width="4.6" height="4.8"/></g><g stroke="#454545" stroke-width="0.4"><path d="M98 8.6H102.6M100.3 8.6V11.8M105.2 14.6H109.8M107.5 14.6V17.8"/></g><path d="M104 7.6 C107.6 7.6 109 9.4 109 11.6" fill="none" stroke="#cfcfcf" stroke-width="0.8"/><path d="M103.2 7.6 L105 6.4 L105 8.8 Z" fill="#cfcfcf"/><path d="M99 13 C99 15.6 100.6 17 103.4 17" fill="none" stroke="#cfcfcf" stroke-width="0.8"/><path d="M104.4 17 L102.6 15.8 L102.6 18.2 Z" fill="#cfcfcf"/><path d="M113 12.2 L116 12.2 L114.5 14 Z" fill="#9a9a9a"/><g fill="#d4d4d4"><path d="M122 8.4 L125.2 7 L128.6 8.4 L128.6 13.4 L125.2 15 L122 13.4 Z"/></g><path d="M122 8.4 L125.2 9.8 L128.6 8.4 M125.2 9.8V15" stroke="#454545" stroke-width="0.5" fill="none"/><rect x="128.2" y="13" width="4.8" height="5.4" fill="#454545"/><rect x="128.6" y="13.4" width="4.2" height="4.8" fill="none" stroke="#d4d4d4" stroke-width="0.7"/><path d="M129.6 15.8H131.8" stroke="#d4d4d4" stroke-width="0.7"/><rect x="411" y="11.6" width="58" height="2" fill="#7c7c7c"/><rect x="415.6" y="9" width="3.4" height="8.2" fill="#b4b4b4"/><rect x="416.8" y="9" width="1" height="8.2" fill="#8a8a8a"/><g fill="#bdbdbd"><rect x="477" y="8" width="4.2" height="4.2"/><rect x="482.3" y="8" width="4.2" height="4.2"/><rect x="477" y="13.2" width="4.2" height="4.2"/><rect x="482.3" y="13.2" width="4.2" height="4.2"/></g><path d="M489 12.2 L492 12.2 L490.5 14 Z" fill="#9a9a9a"/><rect x="496.2" y="8.2" width="9.4" height="1.6" fill="#a8a8a8"/><rect x="496.2" y="10.6" width="7.4" height="1.2" fill="#d8d8d8"/><rect x="496.2" y="12.8" width="5.4" height="1.2" fill="#d8d8d8"/><rect x="496.2" y="15" width="3.6" height="1.2" fill="#d8d8d8"/><rect x="508" y="12" width="2.2" height="0.9" fill="#aaa"/></svg></body></html>
